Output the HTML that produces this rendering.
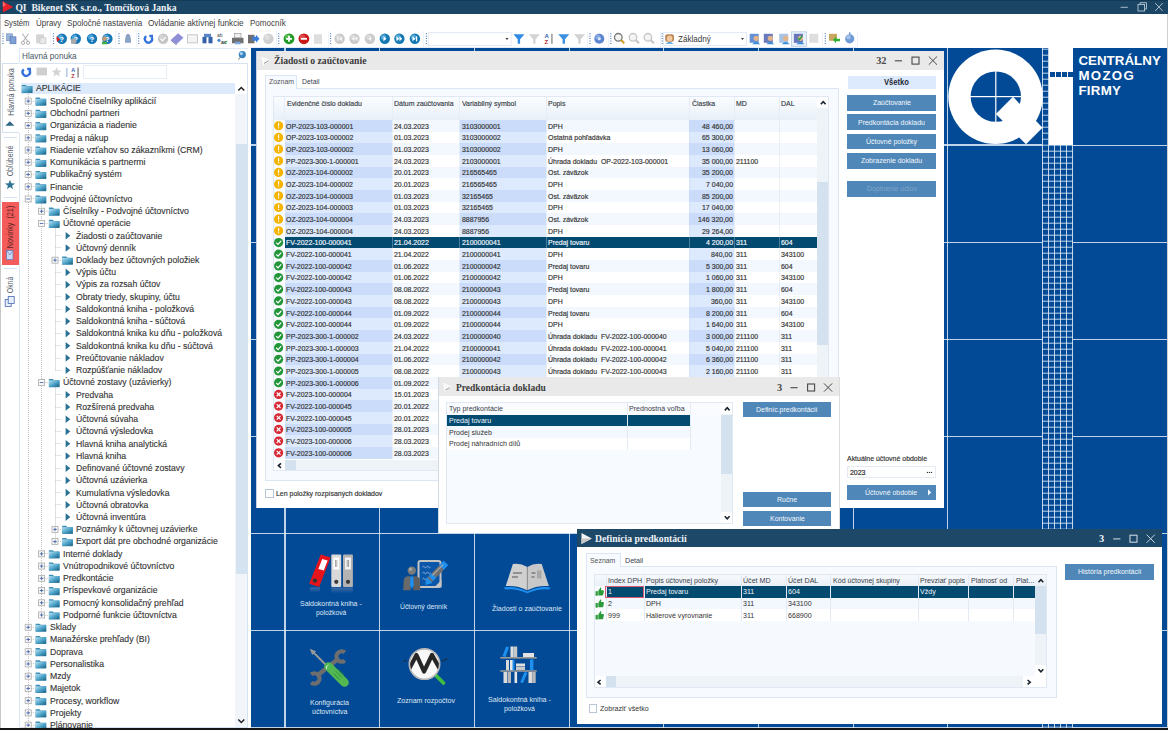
<!DOCTYPE html>
<html><head><meta charset="utf-8"><style>
html,body{margin:0;padding:0;width:1168px;height:730px;overflow:hidden;background:#fff;position:relative;}
body>div, .a>div{position:absolute;}
.t{white-space:pre;}
</style></head><body>
<div style="left:0.00px;top:0.00px;width:1168.00px;height:14.00px;background:#1b4565;"></div>
<div style="left:0.00px;top:14.00px;width:1168.00px;height:33.00px;background:#ffffff;"></div>
<div style="left:0.00px;top:14.00px;width:1.20px;height:716.00px;background:#c9c9c9;"></div>
<div style="left:0.00px;top:0.00px;width:1168.00px;height:0.80px;background:#153a56;"></div>
<svg style="position:absolute;left:0;top:0" width="200" height="14"><polygon points="2.8,1.2 13.2,7 2.8,12.6" fill="#e8202a"/><polygon points="2.8,1.2 6,5 2.8,7" fill="#ff6a6a"/></svg>
<div class="t" style="left:15.40px;top:2.00px;font:bold 9.6px/12px 'Liberation Serif',sans-serif;color:#eef2f6;letter-spacing:0.000px;">QI  Bikenet SK s.r.o., Tomčíková Janka</div>
<svg style="position:absolute;left:1110px;top:0" width="58" height="14" fill="none" stroke="#a9bccb" stroke-width="1"><line x1="10.6" y1="7.3" x2="17.8" y2="7.3"/><rect x="28" y="4.5" width="6.5" height="6.5"/><path d="M30,4.5 V2.7 H36.5 V9 H34.5"/><path d="M45.2,3 L52.7,11 M52.7,3 L45.2,11"/></svg>
<div style="left:1166.80px;top:14.00px;width:1.20px;height:716.00px;background:#cfcfcf;"></div>
<div class="t" style="left:4.00px;top:17.00px;font:normal 8.9px/12px 'Liberation Sans',sans-serif;color:#404040;letter-spacing:0.000px;transform:scaleX(0.8594);transform-origin:0 50%;">Systém</div>
<div class="t" style="left:36.00px;top:17.00px;font:normal 8.9px/12px 'Liberation Sans',sans-serif;color:#404040;letter-spacing:0.000px;transform:scaleX(0.9010);transform-origin:0 50%;">Úpravy</div>
<div class="t" style="left:66.80px;top:17.00px;font:normal 8.9px/12px 'Liberation Sans',sans-serif;color:#404040;letter-spacing:0.000px;transform:scaleX(0.9137);transform-origin:0 50%;">Spoločné nastavenia</div>
<div class="t" style="left:148.00px;top:17.00px;font:normal 8.9px/12px 'Liberation Sans',sans-serif;color:#404040;letter-spacing:0.000px;transform:scaleX(0.9231);transform-origin:0 50%;">Ovládanie aktívnej funkcie</div>
<div class="t" style="left:249.70px;top:17.00px;font:normal 8.9px/12px 'Liberation Sans',sans-serif;color:#404040;letter-spacing:0.000px;transform:scaleX(0.9072);transform-origin:0 50%;">Pomocník</div>
<div style="left:1.20px;top:46.60px;width:856.00px;height:0.80px;background:#e2ebf6;"></div>
<div style="left:50.30px;top:31.00px;width:0.80px;height:15.60px;background:#eef3f9;"></div>
<div style="left:115.30px;top:31.00px;width:0.80px;height:15.60px;background:#eef3f9;"></div>
<div style="left:135.50px;top:31.00px;width:0.80px;height:15.60px;background:#eef3f9;"></div>
<div style="left:275.50px;top:31.00px;width:0.80px;height:15.60px;background:#eef3f9;"></div>
<div style="left:327.50px;top:31.00px;width:0.80px;height:15.60px;background:#eef3f9;"></div>
<div style="left:423.40px;top:31.00px;width:0.80px;height:15.60px;background:#eef3f9;"></div>
<div style="left:587.00px;top:31.00px;width:0.80px;height:15.60px;background:#eef3f9;"></div>
<div style="left:608.00px;top:31.00px;width:0.80px;height:15.60px;background:#eef3f9;"></div>
<div style="left:659.50px;top:31.00px;width:0.80px;height:15.60px;background:#eef3f9;"></div>
<div style="left:822.00px;top:31.00px;width:0.80px;height:15.60px;background:#eef3f9;"></div>
<div style="left:857.40px;top:31.00px;width:0.80px;height:15.60px;background:#eef3f9;"></div>
<svg style="position:absolute;left:0;top:0" width="870" height="48"><line x1="3" y1="33.3" x2="3" y2="44.8" stroke="#4f7fc0" stroke-width="1.2" stroke-dasharray="1,1.4"/><line x1="53.5" y1="33.3" x2="53.5" y2="44.8" stroke="#4f7fc0" stroke-width="1.2" stroke-dasharray="1,1.4"/><line x1="119" y1="33.3" x2="119" y2="44.8" stroke="#4f7fc0" stroke-width="1.2" stroke-dasharray="1,1.4"/><line x1="138.7" y1="33.3" x2="138.7" y2="44.8" stroke="#4f7fc0" stroke-width="1.2" stroke-dasharray="1,1.4"/><line x1="278.7" y1="33.3" x2="278.7" y2="44.8" stroke="#4f7fc0" stroke-width="1.2" stroke-dasharray="1,1.4"/><line x1="330.6" y1="33.3" x2="330.6" y2="44.8" stroke="#4f7fc0" stroke-width="1.2" stroke-dasharray="1,1.4"/><line x1="426.4" y1="33.3" x2="426.4" y2="44.8" stroke="#4f7fc0" stroke-width="1.2" stroke-dasharray="1,1.4"/><line x1="590" y1="33.3" x2="590" y2="44.8" stroke="#4f7fc0" stroke-width="1.2" stroke-dasharray="1,1.4"/><line x1="610.8" y1="33.3" x2="610.8" y2="44.8" stroke="#4f7fc0" stroke-width="1.2" stroke-dasharray="1,1.4"/><line x1="662.2" y1="33.3" x2="662.2" y2="44.8" stroke="#4f7fc0" stroke-width="1.2" stroke-dasharray="1,1.4"/><line x1="825.3" y1="33.3" x2="825.3" y2="44.8" stroke="#4f7fc0" stroke-width="1.2" stroke-dasharray="1,1.4"/><rect x="6.5" y="33.8" width="6" height="7" fill="#9bb4d8" stroke="#6d8cc0" stroke-width=".6"/><rect x="10" y="36.8" width="6" height="7" fill="#7f9fd6" stroke="#4f70b0" stroke-width=".6"/><path d="M22.5,33.8 L28,41.8 M28.5,33.8 L23,41.8" stroke="#b5b5b5" stroke-width="1.1" fill="none"/><circle cx="23" cy="42.8" r="1.6" fill="none" stroke="#aaa"/><circle cx="28" cy="42.8" r="1.6" fill="none" stroke="#aaa"/><rect x="36" y="34.3" width="8" height="9" fill="#d6d6d6"/><rect x="40" y="37.8" width="6" height="6" fill="#e8e8e8" stroke="#c0c0c0" stroke-width=".6"/><circle cx="61.8" cy="38.8" r="5.2" fill="#1477b8"/><circle cx="60.5" cy="37.199999999999996" r="2.6" fill="#7cc8f0" opacity=".55"/><text x="61.8" y="41.8" font-family="Liberation Sans" font-weight="bold" font-size="7.5" fill="#fff" text-anchor="middle">?</text><circle cx="75.8" cy="38.8" r="5.2" fill="#1477b8"/><circle cx="74.5" cy="37.199999999999996" r="2.6" fill="#7cc8f0" opacity=".55"/><text x="75.8" y="41.8" font-family="Liberation Sans" font-weight="bold" font-size="7.5" fill="#fff" text-anchor="middle">?</text><circle cx="92" cy="38.8" r="5.2" fill="#1477b8"/><circle cx="90.7" cy="37.199999999999996" r="2.6" fill="#7cc8f0" opacity=".55"/><text x="92" y="41.8" font-family="Liberation Sans" font-weight="bold" font-size="7.5" fill="#fff" text-anchor="middle">?</text><circle cx="107.4" cy="38.8" r="5.2" fill="#1477b8"/><circle cx="106.10000000000001" cy="37.199999999999996" r="2.6" fill="#7cc8f0" opacity=".55"/><text x="107.4" y="41.8" font-family="Liberation Sans" font-weight="bold" font-size="7.5" fill="#fff" text-anchor="middle">?</text><polygon points="56.5,36.3 60,39.3 57,42.3" fill="#e01818"/><rect x="71" y="38.8" width="5" height="5" fill="#a8a8a8"/><circle cx="104.5" cy="38.8" r="2.3" fill="#c89a70"/><rect x="102" y="41.8" width="5" height="2.5" fill="#40b040"/><path d="M125,42.8 Q125,33.8 128,33.8 Q131,33.8 131,42.8 Z" fill="#8aa3c3"/><path d="M146.2,36.199999999999996 A3.6,3.6 0 1 0 151.6,37.199999999999996" fill="none" stroke="#3572dc" stroke-width="2.3"/><polygon points="149.3,34.699999999999996 153,34.699999999999996 153,38.4 151.2,37.3 149.3,37.0" fill="#3572dc"/><circle cx="163.1" cy="38.8" r="5.2" fill="#c4c4c4"/><circle cx="161.79999999999998" cy="37.199999999999996" r="2.6" fill="#e0e0e0" opacity=".55"/><path d="M160.5,38.8 L162.5,40.8 L166,36.8" stroke="#fff" stroke-width="1.2" fill="none"/><polygon points="171,39.8 178,33.3 183.5,37.8 176.5,44.3" fill="#8f8fd8"/><polygon points="171,39.8 176.5,44.3 176.5,45.3 171,40.8" fill="#6a6ab0"/><rect x="187.5" y="34.8" width="10" height="8" fill="#f4f4f4" stroke="#c8c8c8" stroke-width="1"/><rect x="202.5" y="36.8" width="4" height="6.5" fill="#3460a8"/><rect x="208.5" y="36.8" width="4" height="6.5" fill="#3460a8"/><rect x="204" y="33.8" width="7" height="3.5" fill="#5a86c8"/><text x="217" y="37.3" font-family="Liberation Sans" font-size="5" fill="#444">ab</text><text x="221" y="43.8" font-family="Liberation Sans" font-size="5" font-weight="bold" fill="#333">ac</text><circle cx="219" cy="40.3" r="1.6" fill="#4a8ad8"/><path d="M225,43.8 L227,40.8" stroke="#3a3" stroke-width="1"/><rect x="232" y="37.8" width="11.5" height="5.5" fill="#707070"/><rect x="234.5" y="33.3" width="6.5" height="4.5" fill="#f0f0f0" stroke="#909090" stroke-width=".6"/><rect x="235" y="41.8" width="5.5" height="2.5" fill="#7aa6de"/><rect x="248" y="34.8" width="6.5" height="8.5" fill="#6f6f6f"/><polygon points="252.5,36.8 256,36.8 256,34.8 259.5,38.8 256,42.8 256,40.8 252.5,40.8" fill="#3a7fe0"/><circle cx="268.4" cy="38.8" r="5.2" fill="#cfcfcf"/><circle cx="267.09999999999997" cy="37.199999999999996" r="2.6" fill="#ebebeb" opacity=".55"/><circle cx="289" cy="38.8" r="5.4" fill="#1f9a24"/><circle cx="287.7" cy="37.199999999999996" r="2.7" fill="#8be07a" opacity=".55"/><path d="M286,38.8 H292 M289,35.8 V41.8" stroke="#fff" stroke-width="1.8"/><circle cx="303.9" cy="38.8" r="5.4" fill="#c91818"/><circle cx="302.59999999999997" cy="37.199999999999996" r="2.7" fill="#f07070" opacity=".55"/><path d="M300.8,38.8 H307" stroke="#fff" stroke-width="1.8"/><rect x="314" y="34.3" width="8" height="9.5" fill="#dedede"/><circle cx="339.6" cy="38.8" r="5.2" fill="#c9c9c9"/><circle cx="338.3" cy="37.199999999999996" r="2.6" fill="#e6e6e6" opacity=".55"/><circle cx="354.5" cy="38.8" r="5.2" fill="#c9c9c9"/><circle cx="353.2" cy="37.199999999999996" r="2.6" fill="#e6e6e6" opacity=".55"/><circle cx="369.9" cy="38.8" r="5.2" fill="#c9c9c9"/><circle cx="368.59999999999997" cy="37.199999999999996" r="2.6" fill="#e6e6e6" opacity=".55"/><rect x="337.3" y="36.3" width="1.1" height="5" fill="#f4f4f4"/><polygon points="342.2,36.3 339,38.8 342.2,41.3" fill="#f4f4f4"/><polygon points="354.5,36.3 351.8,38.8 354.5,41.3" fill="#f4f4f4"/><polygon points="357.5,36.3 354.8,38.8 357.5,41.3" fill="#f4f4f4"/><polygon points="371.3,36.3 368.3,38.8 371.3,41.3" fill="#f4f4f4"/><circle cx="384.8" cy="38.8" r="5.2" fill="#1779b3"/><circle cx="383.5" cy="37.199999999999996" r="2.6" fill="#7fd0f5" opacity=".55"/><circle cx="399.4" cy="38.8" r="5.2" fill="#1779b3"/><circle cx="398.09999999999997" cy="37.199999999999996" r="2.6" fill="#7fd0f5" opacity=".55"/><circle cx="414.9" cy="38.8" r="5.2" fill="#1779b3"/><circle cx="413.59999999999997" cy="37.199999999999996" r="2.6" fill="#7fd0f5" opacity=".55"/><polygon points="383.5,36.3 386.5,38.8 383.5,41.3" fill="#fff"/><polygon points="396.5,36.3 399.2,38.8 396.5,41.3" fill="#fff"/><polygon points="399.5,36.3 402.2,38.8 399.5,41.3" fill="#fff"/><polygon points="412.5,36.3 415.5,38.8 412.5,41.3" fill="#fff"/><rect x="416" y="36.3" width="1.2" height="5" fill="#fff"/><polygon points="513.4,34.3 524.4,34.3 520.1,39.3 520.1,43.8 517.6999999999999,43.8 517.6999999999999,39.3" fill="#2f8ae6"/><polygon points="528.8,34.3 539.8,34.3 535.5,39.3 535.5,43.8 533.0999999999999,43.8 533.0999999999999,39.3" fill="#d4d4d4"/><polygon points="558.3,34.3 569.3,34.3 565.0,39.3 565.0,43.8 562.5999999999999,43.8 562.5999999999999,39.3" fill="#3b90e0"/><polygon points="574.0,34.3 585.0,34.3 580.7,39.3 580.7,43.8 578.3,43.8 578.3,39.3" fill="#d2d2d2"/><text x="544.5" y="37.8" font-family="Liberation Sans" font-weight="bold" font-size="6" fill="#3060b0">A</text><text x="544.5" y="44.3" font-family="Liberation Sans" font-weight="bold" font-size="6" fill="#b03030">Z</text><rect x="551.5" y="33.8" width="0.9" height="10" fill="#555"/><circle cx="599.3" cy="38.8" r="5" fill="#5d86d2"/><circle cx="598.0" cy="37.199999999999996" r="2.5" fill="#a8c4f0" opacity=".55"/><circle cx="599.3" cy="38.8" r="1.5" fill="#dfe8f8"/><circle cx="618.3" cy="37.3" r="3.8" fill="#f4f4f4" stroke="#777" stroke-width="1.3"/><path d="M621.0999999999999,40.099999999999994 L624.3,43.3" stroke="#d8a030" stroke-width="2.2"/><circle cx="633.0" cy="37.3" r="3.8" fill="#f4f4f4" stroke="#c6c6c6" stroke-width="1.3"/><path d="M635.8,40.099999999999994 L639.0,43.3" stroke="#c6c6c6" stroke-width="2.2"/><circle cx="647.9" cy="37.3" r="3.8" fill="#f4f4f4" stroke="#c6c6c6" stroke-width="1.3"/><path d="M650.6999999999999,40.099999999999994 L653.9,43.3" stroke="#c6c6c6" stroke-width="2.2"/><rect x="428.5" y="32.6" width="82.7" height="13" fill="#fff" stroke="#dfe7f2" stroke-width=".8"/><polygon points="505.5,38 508.5,38 507,40" fill="#333"/><rect x="663.5" y="32.6" width="83" height="13" fill="#fff" stroke="#dfe7f2" stroke-width=".8"/><polygon points="741,38 744,38 742.5,40" fill="#333"/><rect x="665.2" y="34.199999999999996" width="8.8" height="7.6" rx="2.4" fill="#b98350"/><circle cx="669.6" cy="38.4" r="2.9" fill="#f2c9a0"/><path d="M665.5,43.8 Q669.6,40.4 673.7,43.8 Z" fill="#3a9ae8"/><rect x="749.7" y="33.8" width="9" height="9" fill="#4a7ed0" opacity=".85"/><circle cx="756.2" cy="38.3" r="2.6" fill="#e2b48a"/><path d="M752.2,44.3 Q756.2,39.8 760.2,44.3" fill="#3a8ed8"/><rect x="763.8" y="33.8" width="9" height="9" fill="#5060b0" opacity=".85"/><circle cx="770.3" cy="38.3" r="2.6" fill="#e2b48a"/><path d="M766.3,44.3 Q770.3,39.8 774.3,44.3" fill="#3a8ed8"/><rect x="779.2" y="33.8" width="9" height="9" fill="#9ab8e0" opacity=".85"/><circle cx="785.7" cy="38.3" r="2.6" fill="#e2b48a"/><path d="M781.7,44.3 Q785.7,39.8 789.7,44.3" fill="#3a8ed8"/><rect x="791.5" y="31.8" width="15" height="14.5" fill="#e8f0fa" stroke="#b6cce8" stroke-width=".8"/><rect x="793.9" y="33.8" width="9" height="9" fill="#5060b0" opacity=".85"/><circle cx="800.4" cy="38.3" r="2.6" fill="#e2b48a"/><path d="M796.4,44.3 Q800.4,39.8 804.4,44.3" fill="#3a8ed8"/><rect x="809.3" y="33.8" width="9" height="9" fill="#d8d8d8" opacity=".85"/><path d="M798,37.8 L799.5,39.8 L802,35.8" stroke="#20a040" stroke-width="1.3" fill="none"/><rect x="829" y="33.8" width="8" height="7" fill="#c8a860"/><polygon points="833,39.8 836,36.8 836,38.8 840,38.8 840,41.3 836,41.3 836,43.3" fill="#30b030"/><circle cx="849.7" cy="38.8" r="4.6" fill="#6f9ad8"/><circle cx="848.4000000000001" cy="37.199999999999996" r="2.3" fill="#d0e0f8" opacity=".55"/><rect x="849" y="32.3" width="1.5" height="2" fill="#6f9ad8"/></svg>
<div class="t" style="left:677.60px;top:33.00px;font:normal 9.4px/12px 'Liberation Sans',sans-serif;color:#383838;letter-spacing:0.000px;transform:scaleX(0.8653);transform-origin:0 50%;">Základný</div>
<div style="left:1.20px;top:47.40px;width:250.00px;height:680.60px;background:#ffffff;"></div>
<div style="left:19.30px;top:133.40px;width:0.90px;height:594.00px;background:#dbe6f4;"></div>
<div style="left:2px;top:63.3px;width:17.3px;height:70.1px;background:#fff;border:0.9px solid #d3e0f0;border-right:none;box-sizing:border-box"></div>
<div style="left:3.50px;top:136.50px;width:13.50px;height:1.00px;background:#d5e2f3;"></div>
<div style="left:3.50px;top:197.30px;width:13.50px;height:1.00px;background:#d5e2f3;"></div>
<div style="left:2.20px;top:201.80px;width:16.80px;height:63.30px;background:#f45b5b;"></div>
<div style="left:3.50px;top:268.40px;width:13.50px;height:1.00px;background:#d5e2f3;"></div>
<div class="t" style="left:-18.39px;top:86.05px;width:57.37px;height:12px;font:8.6px/12px 'Liberation Sans',sans-serif;color:#56606c;transform:rotate(-90deg) scaleX(0.8314);text-align:center">Hlavná ponuka</div>
<div class="t" style="left:-8.65px;top:155.20px;width:37.89px;height:12px;font:8.6px/12px 'Liberation Sans',sans-serif;color:#56606c;transform:rotate(-90deg) scaleX(0.8076);text-align:center">Obľúbené</div>
<div class="t" style="left:-15.03px;top:220.70px;width:50.66px;height:12px;font:8.6px/12px 'Liberation Sans',sans-serif;color:#5a2424;transform:rotate(-90deg) scaleX(0.8410);text-align:center">Novinky  (21)</div>
<div class="t" style="left:0.02px;top:279.20px;width:20.55px;height:12px;font:8.6px/12px 'Liberation Sans',sans-serif;color:#56606c;transform:rotate(-90deg) scaleX(0.7979);text-align:center">Okná</div>
<div style="left:19.10px;top:47.70px;width:228.50px;height:0.80px;background:#e0e9f5;"></div>
<div style="left:19.10px;top:47.70px;width:0.80px;height:15.50px;background:#e0e9f5;"></div>
<div style="left:19.50px;top:62.80px;width:228.00px;height:0.90px;background:#d7e3f2;"></div>
<div class="t" style="left:21.80px;top:50.00px;font:normal 8.9px/12px 'Liberation Sans',sans-serif;color:#4a5866;letter-spacing:0.000px;transform:scaleX(0.9230);transform-origin:0 50%;">Hlavná ponuka</div>
<div style="left:247.30px;top:63.30px;width:0.90px;height:664.00px;background:#d7e3f2;"></div>
<div style="left:19.50px;top:726.80px;width:228.50px;height:0.90px;background:#d7e3f2;"></div>
<div style="left:235.30px;top:94.00px;width:12.00px;height:633.00px;background:#f1f5fa;"></div>
<div style="left:235.50px;top:143.90px;width:11.60px;height:430.10px;background:#d5e3f0;"></div>
<div style="left:20.80px;top:83.40px;width:214.50px;height:10.20px;background:#dceafb;"></div>
<div class="t" style="left:35.60px;top:82.00px;font:normal 9.2px/12px 'Liberation Sans',sans-serif;color:#333333;letter-spacing:0.000px;-webkit-text-stroke:0.12px #333;transform:scaleX(0.9440);transform-origin:0 50%;">APLIKÁCIE</div>
<div class="t" style="left:49.50px;top:95.00px;font:normal 9.2px/12px 'Liberation Sans',sans-serif;color:#333333;letter-spacing:0.000px;-webkit-text-stroke:0.12px #333;transform:scaleX(0.9440);transform-origin:0 50%;">Spoločné číselníky aplikácií</div>
<div class="t" style="left:49.50px;top:107.00px;font:normal 9.2px/12px 'Liberation Sans',sans-serif;color:#333333;letter-spacing:0.000px;-webkit-text-stroke:0.12px #333;transform:scaleX(0.9440);transform-origin:0 50%;">Obchodní partneri</div>
<div class="t" style="left:49.50px;top:119.00px;font:normal 9.2px/12px 'Liberation Sans',sans-serif;color:#333333;letter-spacing:0.000px;-webkit-text-stroke:0.12px #333;transform:scaleX(0.9440);transform-origin:0 50%;">Organizácia a riadenie</div>
<div class="t" style="left:49.50px;top:132.00px;font:normal 9.2px/12px 'Liberation Sans',sans-serif;color:#333333;letter-spacing:0.000px;-webkit-text-stroke:0.12px #333;transform:scaleX(0.9440);transform-origin:0 50%;">Predaj a nákup</div>
<div class="t" style="left:49.50px;top:144.00px;font:normal 9.2px/12px 'Liberation Sans',sans-serif;color:#333333;letter-spacing:0.000px;-webkit-text-stroke:0.12px #333;transform:scaleX(0.9440);transform-origin:0 50%;">Riadenie vzťahov so zákazníkmi (CRM)</div>
<div class="t" style="left:49.50px;top:156.00px;font:normal 9.2px/12px 'Liberation Sans',sans-serif;color:#333333;letter-spacing:0.000px;-webkit-text-stroke:0.12px #333;transform:scaleX(0.9440);transform-origin:0 50%;">Komunikácia s partnermi</div>
<div class="t" style="left:49.50px;top:168.00px;font:normal 9.2px/12px 'Liberation Sans',sans-serif;color:#333333;letter-spacing:0.000px;-webkit-text-stroke:0.12px #333;transform:scaleX(0.9440);transform-origin:0 50%;">Publikačný systém</div>
<div class="t" style="left:49.50px;top:181.00px;font:normal 9.2px/12px 'Liberation Sans',sans-serif;color:#333333;letter-spacing:0.000px;-webkit-text-stroke:0.12px #333;transform:scaleX(0.9440);transform-origin:0 50%;">Financie</div>
<div class="t" style="left:49.50px;top:193.00px;font:normal 9.2px/12px 'Liberation Sans',sans-serif;color:#333333;letter-spacing:0.000px;-webkit-text-stroke:0.12px #333;transform:scaleX(0.9440);transform-origin:0 50%;">Podvojné účtovníctvo</div>
<div class="t" style="left:62.80px;top:205.00px;font:normal 9.2px/12px 'Liberation Sans',sans-serif;color:#333333;letter-spacing:0.000px;-webkit-text-stroke:0.12px #333;transform:scaleX(0.9440);transform-origin:0 50%;">Číselníky - Podvojné účtovníctvo</div>
<div class="t" style="left:62.80px;top:217.00px;font:normal 9.2px/12px 'Liberation Sans',sans-serif;color:#333333;letter-spacing:0.000px;-webkit-text-stroke:0.12px #333;transform:scaleX(0.9440);transform-origin:0 50%;">Účtovné operácie</div>
<div class="t" style="left:76.10px;top:230.00px;font:normal 9.2px/12px 'Liberation Sans',sans-serif;color:#333333;letter-spacing:0.000px;-webkit-text-stroke:0.12px #333;transform:scaleX(0.9440);transform-origin:0 50%;">Žiadosti o zaúčtovanie</div>
<div class="t" style="left:76.10px;top:242.00px;font:normal 9.2px/12px 'Liberation Sans',sans-serif;color:#333333;letter-spacing:0.000px;-webkit-text-stroke:0.12px #333;transform:scaleX(0.9440);transform-origin:0 50%;">Účtovný denník</div>
<div class="t" style="left:76.10px;top:254.00px;font:normal 9.2px/12px 'Liberation Sans',sans-serif;color:#333333;letter-spacing:0.000px;-webkit-text-stroke:0.12px #333;transform:scaleX(0.9440);transform-origin:0 50%;">Doklady bez účtovných položiek</div>
<div class="t" style="left:76.10px;top:266.00px;font:normal 9.2px/12px 'Liberation Sans',sans-serif;color:#333333;letter-spacing:0.000px;-webkit-text-stroke:0.12px #333;transform:scaleX(0.9440);transform-origin:0 50%;">Výpis účtu</div>
<div class="t" style="left:76.10px;top:278.00px;font:normal 9.2px/12px 'Liberation Sans',sans-serif;color:#333333;letter-spacing:0.000px;-webkit-text-stroke:0.12px #333;transform:scaleX(0.9440);transform-origin:0 50%;">Výpis za rozsah účtov</div>
<div class="t" style="left:76.10px;top:291.00px;font:normal 9.2px/12px 'Liberation Sans',sans-serif;color:#333333;letter-spacing:0.000px;-webkit-text-stroke:0.12px #333;transform:scaleX(0.9440);transform-origin:0 50%;">Obraty triedy, skupiny, účtu</div>
<div class="t" style="left:76.10px;top:303.00px;font:normal 9.2px/12px 'Liberation Sans',sans-serif;color:#333333;letter-spacing:0.000px;-webkit-text-stroke:0.12px #333;transform:scaleX(0.9440);transform-origin:0 50%;">Saldokontná kniha - položková</div>
<div class="t" style="left:76.10px;top:315.00px;font:normal 9.2px/12px 'Liberation Sans',sans-serif;color:#333333;letter-spacing:0.000px;-webkit-text-stroke:0.12px #333;transform:scaleX(0.9440);transform-origin:0 50%;">Saldokontná kniha - súčtová</div>
<div class="t" style="left:76.10px;top:327.00px;font:normal 9.2px/12px 'Liberation Sans',sans-serif;color:#333333;letter-spacing:0.000px;-webkit-text-stroke:0.12px #333;transform:scaleX(0.9440);transform-origin:0 50%;">Saldokontná knika ku dňu - položková</div>
<div class="t" style="left:76.10px;top:340.00px;font:normal 9.2px/12px 'Liberation Sans',sans-serif;color:#333333;letter-spacing:0.000px;-webkit-text-stroke:0.12px #333;transform:scaleX(0.9440);transform-origin:0 50%;">Saldokontná knika ku dňu - súčtová</div>
<div class="t" style="left:76.10px;top:352.00px;font:normal 9.2px/12px 'Liberation Sans',sans-serif;color:#333333;letter-spacing:0.000px;-webkit-text-stroke:0.12px #333;transform:scaleX(0.9440);transform-origin:0 50%;">Preúčtovanie nákladov</div>
<div class="t" style="left:76.10px;top:364.00px;font:normal 9.2px/12px 'Liberation Sans',sans-serif;color:#333333;letter-spacing:0.000px;-webkit-text-stroke:0.12px #333;transform:scaleX(0.9440);transform-origin:0 50%;">Rozpúšťanie nákladov</div>
<div class="t" style="left:62.80px;top:376.00px;font:normal 9.2px/12px 'Liberation Sans',sans-serif;color:#333333;letter-spacing:0.000px;-webkit-text-stroke:0.12px #333;transform:scaleX(0.9440);transform-origin:0 50%;">Účtovné zostavy (uzávierky)</div>
<div class="t" style="left:76.10px;top:389.00px;font:normal 9.2px/12px 'Liberation Sans',sans-serif;color:#333333;letter-spacing:0.000px;-webkit-text-stroke:0.12px #333;transform:scaleX(0.9440);transform-origin:0 50%;">Predvaha</div>
<div class="t" style="left:76.10px;top:401.00px;font:normal 9.2px/12px 'Liberation Sans',sans-serif;color:#333333;letter-spacing:0.000px;-webkit-text-stroke:0.12px #333;transform:scaleX(0.9440);transform-origin:0 50%;">Rozšírená predvaha</div>
<div class="t" style="left:76.10px;top:413.00px;font:normal 9.2px/12px 'Liberation Sans',sans-serif;color:#333333;letter-spacing:0.000px;-webkit-text-stroke:0.12px #333;transform:scaleX(0.9440);transform-origin:0 50%;">Účtovná súvaha</div>
<div class="t" style="left:76.10px;top:425.00px;font:normal 9.2px/12px 'Liberation Sans',sans-serif;color:#333333;letter-spacing:0.000px;-webkit-text-stroke:0.12px #333;transform:scaleX(0.9440);transform-origin:0 50%;">Účtovná výsledovka</div>
<div class="t" style="left:76.10px;top:438.00px;font:normal 9.2px/12px 'Liberation Sans',sans-serif;color:#333333;letter-spacing:0.000px;-webkit-text-stroke:0.12px #333;transform:scaleX(0.9440);transform-origin:0 50%;">Hlavná kniha analytická</div>
<div class="t" style="left:76.10px;top:450.00px;font:normal 9.2px/12px 'Liberation Sans',sans-serif;color:#333333;letter-spacing:0.000px;-webkit-text-stroke:0.12px #333;transform:scaleX(0.9440);transform-origin:0 50%;">Hlavná kniha</div>
<div class="t" style="left:76.10px;top:462.00px;font:normal 9.2px/12px 'Liberation Sans',sans-serif;color:#333333;letter-spacing:0.000px;-webkit-text-stroke:0.12px #333;transform:scaleX(0.9440);transform-origin:0 50%;">Definované účtovné zostavy</div>
<div class="t" style="left:76.10px;top:474.00px;font:normal 9.2px/12px 'Liberation Sans',sans-serif;color:#333333;letter-spacing:0.000px;-webkit-text-stroke:0.12px #333;transform:scaleX(0.9440);transform-origin:0 50%;">Účtovná uzávierka</div>
<div class="t" style="left:76.10px;top:487.00px;font:normal 9.2px/12px 'Liberation Sans',sans-serif;color:#333333;letter-spacing:0.000px;-webkit-text-stroke:0.12px #333;transform:scaleX(0.9440);transform-origin:0 50%;">Kumulatívna výsledovka</div>
<div class="t" style="left:76.10px;top:499.00px;font:normal 9.2px/12px 'Liberation Sans',sans-serif;color:#333333;letter-spacing:0.000px;-webkit-text-stroke:0.12px #333;transform:scaleX(0.9440);transform-origin:0 50%;">Účtovná obratovka</div>
<div class="t" style="left:76.10px;top:511.00px;font:normal 9.2px/12px 'Liberation Sans',sans-serif;color:#333333;letter-spacing:0.000px;-webkit-text-stroke:0.12px #333;transform:scaleX(0.9440);transform-origin:0 50%;">Účtovná inventúra</div>
<div class="t" style="left:76.10px;top:523.00px;font:normal 9.2px/12px 'Liberation Sans',sans-serif;color:#333333;letter-spacing:0.000px;-webkit-text-stroke:0.12px #333;transform:scaleX(0.9440);transform-origin:0 50%;">Poznámky k účtovnej uzávierke</div>
<div class="t" style="left:76.10px;top:535.00px;font:normal 9.2px/12px 'Liberation Sans',sans-serif;color:#333333;letter-spacing:0.000px;-webkit-text-stroke:0.12px #333;transform:scaleX(0.9440);transform-origin:0 50%;">Export dát pre obchodné organizácie</div>
<div class="t" style="left:62.80px;top:548.00px;font:normal 9.2px/12px 'Liberation Sans',sans-serif;color:#333333;letter-spacing:0.000px;-webkit-text-stroke:0.12px #333;transform:scaleX(0.9440);transform-origin:0 50%;">Interné doklady</div>
<div class="t" style="left:62.80px;top:560.00px;font:normal 9.2px/12px 'Liberation Sans',sans-serif;color:#333333;letter-spacing:0.000px;-webkit-text-stroke:0.12px #333;transform:scaleX(0.9440);transform-origin:0 50%;">Vnútropodnikové účtovníctvo</div>
<div class="t" style="left:62.80px;top:572.00px;font:normal 9.2px/12px 'Liberation Sans',sans-serif;color:#333333;letter-spacing:0.000px;-webkit-text-stroke:0.12px #333;transform:scaleX(0.9440);transform-origin:0 50%;">Predkontácie</div>
<div class="t" style="left:62.80px;top:584.00px;font:normal 9.2px/12px 'Liberation Sans',sans-serif;color:#333333;letter-spacing:0.000px;-webkit-text-stroke:0.12px #333;transform:scaleX(0.9440);transform-origin:0 50%;">Príspevkové organizácie</div>
<div class="t" style="left:62.80px;top:597.00px;font:normal 9.2px/12px 'Liberation Sans',sans-serif;color:#333333;letter-spacing:0.000px;-webkit-text-stroke:0.12px #333;transform:scaleX(0.9440);transform-origin:0 50%;">Pomocný konsolidačný prehľad</div>
<div class="t" style="left:62.80px;top:609.00px;font:normal 9.2px/12px 'Liberation Sans',sans-serif;color:#333333;letter-spacing:0.000px;-webkit-text-stroke:0.12px #333;transform:scaleX(0.9440);transform-origin:0 50%;">Podporné funkcie účtovníctva</div>
<div class="t" style="left:49.50px;top:621.00px;font:normal 9.2px/12px 'Liberation Sans',sans-serif;color:#333333;letter-spacing:0.000px;-webkit-text-stroke:0.12px #333;transform:scaleX(0.9440);transform-origin:0 50%;">Sklady</div>
<div class="t" style="left:49.50px;top:633.00px;font:normal 9.2px/12px 'Liberation Sans',sans-serif;color:#333333;letter-spacing:0.000px;-webkit-text-stroke:0.12px #333;transform:scaleX(0.9440);transform-origin:0 50%;">Manažérske prehľady (BI)</div>
<div class="t" style="left:49.50px;top:646.00px;font:normal 9.2px/12px 'Liberation Sans',sans-serif;color:#333333;letter-spacing:0.000px;-webkit-text-stroke:0.12px #333;transform:scaleX(0.9440);transform-origin:0 50%;">Doprava</div>
<div class="t" style="left:49.50px;top:658.00px;font:normal 9.2px/12px 'Liberation Sans',sans-serif;color:#333333;letter-spacing:0.000px;-webkit-text-stroke:0.12px #333;transform:scaleX(0.9440);transform-origin:0 50%;">Personalistika</div>
<div class="t" style="left:49.50px;top:670.00px;font:normal 9.2px/12px 'Liberation Sans',sans-serif;color:#333333;letter-spacing:0.000px;-webkit-text-stroke:0.12px #333;transform:scaleX(0.9440);transform-origin:0 50%;">Mzdy</div>
<div class="t" style="left:49.50px;top:682.00px;font:normal 9.2px/12px 'Liberation Sans',sans-serif;color:#333333;letter-spacing:0.000px;-webkit-text-stroke:0.12px #333;transform:scaleX(0.9440);transform-origin:0 50%;">Majetok</div>
<div class="t" style="left:49.50px;top:695.00px;font:normal 9.2px/12px 'Liberation Sans',sans-serif;color:#333333;letter-spacing:0.000px;-webkit-text-stroke:0.12px #333;transform:scaleX(0.9440);transform-origin:0 50%;">Procesy, workflow</div>
<div class="t" style="left:49.50px;top:707.00px;font:normal 9.2px/12px 'Liberation Sans',sans-serif;color:#333333;letter-spacing:0.000px;-webkit-text-stroke:0.12px #333;transform:scaleX(0.9440);transform-origin:0 50%;">Projekty</div>
<div class="t" style="left:49.50px;top:719.00px;font:normal 9.2px/12px 'Liberation Sans',sans-serif;color:#333333;letter-spacing:0.000px;-webkit-text-stroke:0.12px #333;transform:scaleX(0.9440);transform-origin:0 50%;">Plánovanie</div>
<svg style="position:absolute;left:0;top:0" width="252" height="730"><defs><linearGradient id="fg" x1="0" y1="0" x2="1" y2="1"><stop offset="0" stop-color="#b9e0f2"/><stop offset=".55" stop-color="#4aa2c8"/><stop offset="1" stop-color="#1d5f80"/></linearGradient></defs><polygon points="5.3,125.7 14.3,125.7 9.8,121.3" fill="#2b6684"/><polygon points="10,179.8 11.3,183.3 15,183.5 12.1,185.7 13.1,189.2 10,187.1 6.9,189.2 7.9,185.7 5,183.5 8.7,183.3" fill="#2f7394"/><rect x="6.6" y="250.3" width="6.4" height="9.3" fill="#c9d6f2" stroke="#5a78b8" stroke-width=".7"/><path d="M6.6,250.3 L9.8,255 L13,250.3" fill="none" stroke="#5a78b8" stroke-width=".6"/><rect x="5.2" y="299.5" width="6" height="7" fill="#e8eefa" stroke="#4a6ab0" stroke-width=".8"/><rect x="8.2" y="296.5" width="6" height="7" fill="#e8eefa" stroke="#4a6ab0" stroke-width=".8"/><circle cx="242.3" cy="54.6" r="3.6" fill="#3a84c0"/><circle cx="241.3" cy="53.6" r="1.6" fill="#a8d4f4"/><path d="M240,57.5 L238.5,59.5" stroke="#667" stroke-width="1"/><path d="M23.8,69.4 A3.7,3.7 0 1 0 29.4,70.2" fill="none" stroke="#3572dc" stroke-width="2.3"/><polygon points="27.2,67.7 31,67.7 31,71.5 29.1,70.4 27.2,70.1" fill="#3572dc"/><rect x="36.6" y="67.6" width="10.4" height="7.8" fill="#cfcfcf"/><polygon points="56.6,67.2 58,70.6 61.6,70.8 58.8,73 59.8,76.5 56.6,74.5 53.4,76.5 54.4,73 51.6,70.8 55.2,70.6" fill="#d3d3d3"/><rect x="66.5" y="68" width="0.8" height="9" fill="#6a9ad0"/><text x="71.3" y="72" font-family="Liberation Sans" font-weight="bold" font-size="5.4" fill="#3464b4">A</text><text x="71.3" y="78" font-family="Liberation Sans" font-weight="bold" font-size="5.6" fill="#b03434">Z</text><rect x="77.6" y="67.5" width="0.9" height="10" fill="#444"/><rect x="83.5" y="65.5" width="83" height="13" fill="#fff" stroke="#e2eaf5" stroke-width=".9"/><path d="M238.3,90.5 L241.3,87.5 L244.3,90.5" fill="none" stroke="#222" stroke-width="1.5"/><path d="M238.3,719.5 L241.3,722.5 L244.3,719.5" fill="none" stroke="#222" stroke-width="1.5"/><line x1="28.5" y1="94" x2="28.5" y2="727" stroke="#c2c2c2" stroke-width="1" stroke-dasharray="1,1"/><line x1="41.5" y1="201.988" x2="41.5" y2="615.0120000000001" stroke="#c2c2c2" stroke-width="1" stroke-dasharray="1,1"/><line x1="55.5" y1="226.46" x2="55.5" y2="370.29200000000003" stroke="#c2c2c2" stroke-width="1" stroke-dasharray="1,1"/><line x1="55.5" y1="385.528" x2="55.5" y2="541.596" stroke="#c2c2c2" stroke-width="1" stroke-dasharray="1,1"/><path d="M21.8,84.9 h4 l1,1.2 h5.6 v7 h-10.6 z" fill="#3d8db5"/><rect x="21.8" y="86.3" width="10.6" height="6.3" fill="url(#fg)"/><line x1="31.2" y1="101.5" x2="35.2" y2="101.5" stroke="#c6c6c6" stroke-width="1" stroke-dasharray="1,1"/><rect x="25.2" y="98.1" width="6" height="6" fill="#fafafa" stroke="#a9a9a9" stroke-width=".8"/><line x1="26.4" y1="101.1" x2="30.0" y2="101.1" stroke="#3050a0" stroke-width=".8"/><line x1="28.2" y1="99.3" x2="28.2" y2="102.89999999999999" stroke="#3050a0" stroke-width=".8"/><path d="M35.6,97.5 h4 l1,1.2 h5.6 v7 h-10.6 z" fill="#3d8db5"/><rect x="35.6" y="98.89999999999999" width="10.6" height="6.3" fill="url(#fg)"/><line x1="31.2" y1="113.5" x2="35.2" y2="113.5" stroke="#c6c6c6" stroke-width="1" stroke-dasharray="1,1"/><rect x="25.2" y="110.336" width="6" height="6" fill="#fafafa" stroke="#a9a9a9" stroke-width=".8"/><line x1="26.4" y1="113.336" x2="30.0" y2="113.336" stroke="#3050a0" stroke-width=".8"/><line x1="28.2" y1="111.536" x2="28.2" y2="115.136" stroke="#3050a0" stroke-width=".8"/><path d="M35.6,109.736 h4 l1,1.2 h5.6 v7 h-10.6 z" fill="#3d8db5"/><rect x="35.6" y="111.136" width="10.6" height="6.3" fill="url(#fg)"/><line x1="31.2" y1="125.5" x2="35.2" y2="125.5" stroke="#c6c6c6" stroke-width="1" stroke-dasharray="1,1"/><rect x="25.2" y="122.572" width="6" height="6" fill="#fafafa" stroke="#a9a9a9" stroke-width=".8"/><line x1="26.4" y1="125.572" x2="30.0" y2="125.572" stroke="#3050a0" stroke-width=".8"/><line x1="28.2" y1="123.772" x2="28.2" y2="127.372" stroke="#3050a0" stroke-width=".8"/><path d="M35.6,121.97200000000001 h4 l1,1.2 h5.6 v7 h-10.6 z" fill="#3d8db5"/><rect x="35.6" y="123.372" width="10.6" height="6.3" fill="url(#fg)"/><line x1="31.2" y1="137.5" x2="35.2" y2="137.5" stroke="#c6c6c6" stroke-width="1" stroke-dasharray="1,1"/><rect x="25.2" y="134.808" width="6" height="6" fill="#fafafa" stroke="#a9a9a9" stroke-width=".8"/><line x1="26.4" y1="137.808" x2="30.0" y2="137.808" stroke="#3050a0" stroke-width=".8"/><line x1="28.2" y1="136.00799999999998" x2="28.2" y2="139.608" stroke="#3050a0" stroke-width=".8"/><path d="M35.6,134.208 h4 l1,1.2 h5.6 v7 h-10.6 z" fill="#3d8db5"/><rect x="35.6" y="135.608" width="10.6" height="6.3" fill="url(#fg)"/><line x1="31.2" y1="150.5" x2="35.2" y2="150.5" stroke="#c6c6c6" stroke-width="1" stroke-dasharray="1,1"/><rect x="25.2" y="147.04399999999998" width="6" height="6" fill="#fafafa" stroke="#a9a9a9" stroke-width=".8"/><line x1="26.4" y1="150.04399999999998" x2="30.0" y2="150.04399999999998" stroke="#3050a0" stroke-width=".8"/><line x1="28.2" y1="148.24399999999997" x2="28.2" y2="151.844" stroke="#3050a0" stroke-width=".8"/><path d="M35.6,146.444 h4 l1,1.2 h5.6 v7 h-10.6 z" fill="#3d8db5"/><rect x="35.6" y="147.844" width="10.6" height="6.3" fill="url(#fg)"/><line x1="31.2" y1="162.5" x2="35.2" y2="162.5" stroke="#c6c6c6" stroke-width="1" stroke-dasharray="1,1"/><rect x="25.2" y="159.28" width="6" height="6" fill="#fafafa" stroke="#a9a9a9" stroke-width=".8"/><line x1="26.4" y1="162.28" x2="30.0" y2="162.28" stroke="#3050a0" stroke-width=".8"/><line x1="28.2" y1="160.48" x2="28.2" y2="164.08" stroke="#3050a0" stroke-width=".8"/><path d="M35.6,158.68 h4 l1,1.2 h5.6 v7 h-10.6 z" fill="#3d8db5"/><rect x="35.6" y="160.08" width="10.6" height="6.3" fill="url(#fg)"/><line x1="31.2" y1="174.5" x2="35.2" y2="174.5" stroke="#c6c6c6" stroke-width="1" stroke-dasharray="1,1"/><rect x="25.2" y="171.516" width="6" height="6" fill="#fafafa" stroke="#a9a9a9" stroke-width=".8"/><line x1="26.4" y1="174.516" x2="30.0" y2="174.516" stroke="#3050a0" stroke-width=".8"/><line x1="28.2" y1="172.71599999999998" x2="28.2" y2="176.316" stroke="#3050a0" stroke-width=".8"/><path d="M35.6,170.916 h4 l1,1.2 h5.6 v7 h-10.6 z" fill="#3d8db5"/><rect x="35.6" y="172.316" width="10.6" height="6.3" fill="url(#fg)"/><line x1="31.2" y1="186.5" x2="35.2" y2="186.5" stroke="#c6c6c6" stroke-width="1" stroke-dasharray="1,1"/><rect x="25.2" y="183.752" width="6" height="6" fill="#fafafa" stroke="#a9a9a9" stroke-width=".8"/><line x1="26.4" y1="186.752" x2="30.0" y2="186.752" stroke="#3050a0" stroke-width=".8"/><line x1="28.2" y1="184.952" x2="28.2" y2="188.55200000000002" stroke="#3050a0" stroke-width=".8"/><path d="M35.6,183.15200000000002 h4 l1,1.2 h5.6 v7 h-10.6 z" fill="#3d8db5"/><rect x="35.6" y="184.55200000000002" width="10.6" height="6.3" fill="url(#fg)"/><line x1="31.2" y1="198.5" x2="35.2" y2="198.5" stroke="#c6c6c6" stroke-width="1" stroke-dasharray="1,1"/><rect x="25.2" y="195.988" width="6" height="6" fill="#fafafa" stroke="#a9a9a9" stroke-width=".8"/><line x1="26.4" y1="198.988" x2="30.0" y2="198.988" stroke="#3050a0" stroke-width=".8"/><path d="M35.6,195.388 h4 l1,1.2 h5.6 v7 h-10.6 z" fill="#3d8db5"/><rect x="35.6" y="196.788" width="10.6" height="6.3" fill="url(#fg)"/><line x1="44.6" y1="211.5" x2="48.6" y2="211.5" stroke="#c6c6c6" stroke-width="1" stroke-dasharray="1,1"/><rect x="38.6" y="208.224" width="6" height="6" fill="#fafafa" stroke="#a9a9a9" stroke-width=".8"/><line x1="39.800000000000004" y1="211.224" x2="43.4" y2="211.224" stroke="#3050a0" stroke-width=".8"/><line x1="41.6" y1="209.42399999999998" x2="41.6" y2="213.024" stroke="#3050a0" stroke-width=".8"/><path d="M48.9,207.624 h4 l1,1.2 h5.6 v7 h-10.6 z" fill="#3d8db5"/><rect x="48.9" y="209.024" width="10.6" height="6.3" fill="url(#fg)"/><line x1="44.6" y1="223.5" x2="48.6" y2="223.5" stroke="#c6c6c6" stroke-width="1" stroke-dasharray="1,1"/><rect x="38.6" y="220.46" width="6" height="6" fill="#fafafa" stroke="#a9a9a9" stroke-width=".8"/><line x1="39.800000000000004" y1="223.46" x2="43.4" y2="223.46" stroke="#3050a0" stroke-width=".8"/><path d="M48.9,219.86 h4 l1,1.2 h5.6 v7 h-10.6 z" fill="#3d8db5"/><rect x="48.9" y="221.26000000000002" width="10.6" height="6.3" fill="url(#fg)"/><line x1="55.3" y1="235.5" x2="61.5" y2="235.5" stroke="#c6c6c6" stroke-width="1" stroke-dasharray="1,1"/><polygon points="65.6,231.896 70.3,235.696 65.6,239.496" fill="#2a7194"/><line x1="55.3" y1="247.5" x2="61.5" y2="247.5" stroke="#c6c6c6" stroke-width="1" stroke-dasharray="1,1"/><polygon points="65.6,244.13199999999998 70.3,247.932 65.6,251.732" fill="#2a7194"/><line x1="58.0" y1="260.5" x2="62.0" y2="260.5" stroke="#c6c6c6" stroke-width="1" stroke-dasharray="1,1"/><rect x="52.0" y="257.168" width="6" height="6" fill="#fafafa" stroke="#a9a9a9" stroke-width=".8"/><line x1="53.2" y1="260.168" x2="56.8" y2="260.168" stroke="#3050a0" stroke-width=".8"/><line x1="55.0" y1="258.368" x2="55.0" y2="261.968" stroke="#3050a0" stroke-width=".8"/><path d="M62.199999999999996,256.568 h4 l1,1.2 h5.6 v7 h-10.6 z" fill="#3d8db5"/><rect x="62.199999999999996" y="257.968" width="10.6" height="6.3" fill="url(#fg)"/><line x1="55.3" y1="272.5" x2="61.5" y2="272.5" stroke="#c6c6c6" stroke-width="1" stroke-dasharray="1,1"/><polygon points="65.6,268.604 70.3,272.404 65.6,276.204" fill="#2a7194"/><line x1="55.3" y1="284.5" x2="61.5" y2="284.5" stroke="#c6c6c6" stroke-width="1" stroke-dasharray="1,1"/><polygon points="65.6,280.84 70.3,284.64 65.6,288.44" fill="#2a7194"/><line x1="55.3" y1="296.5" x2="61.5" y2="296.5" stroke="#c6c6c6" stroke-width="1" stroke-dasharray="1,1"/><polygon points="65.6,293.07599999999996 70.3,296.876 65.6,300.676" fill="#2a7194"/><line x1="55.3" y1="309.5" x2="61.5" y2="309.5" stroke="#c6c6c6" stroke-width="1" stroke-dasharray="1,1"/><polygon points="65.6,305.31199999999995 70.3,309.11199999999997 65.6,312.912" fill="#2a7194"/><line x1="55.3" y1="321.5" x2="61.5" y2="321.5" stroke="#c6c6c6" stroke-width="1" stroke-dasharray="1,1"/><polygon points="65.6,317.548 70.3,321.348 65.6,325.148" fill="#2a7194"/><line x1="55.3" y1="333.5" x2="61.5" y2="333.5" stroke="#c6c6c6" stroke-width="1" stroke-dasharray="1,1"/><polygon points="65.6,329.784 70.3,333.584 65.6,337.384" fill="#2a7194"/><line x1="55.3" y1="345.5" x2="61.5" y2="345.5" stroke="#c6c6c6" stroke-width="1" stroke-dasharray="1,1"/><polygon points="65.6,342.02000000000004 70.3,345.82000000000005 65.6,349.62000000000006" fill="#2a7194"/><line x1="55.3" y1="358.5" x2="61.5" y2="358.5" stroke="#c6c6c6" stroke-width="1" stroke-dasharray="1,1"/><polygon points="65.6,354.25600000000003 70.3,358.05600000000004 65.6,361.85600000000005" fill="#2a7194"/><line x1="55.3" y1="370.5" x2="61.5" y2="370.5" stroke="#c6c6c6" stroke-width="1" stroke-dasharray="1,1"/><polygon points="65.6,366.492 70.3,370.29200000000003 65.6,374.09200000000004" fill="#2a7194"/><line x1="44.6" y1="382.5" x2="48.6" y2="382.5" stroke="#c6c6c6" stroke-width="1" stroke-dasharray="1,1"/><rect x="38.6" y="379.528" width="6" height="6" fill="#fafafa" stroke="#a9a9a9" stroke-width=".8"/><line x1="39.800000000000004" y1="382.528" x2="43.4" y2="382.528" stroke="#3050a0" stroke-width=".8"/><path d="M48.9,378.928 h4 l1,1.2 h5.6 v7 h-10.6 z" fill="#3d8db5"/><rect x="48.9" y="380.32800000000003" width="10.6" height="6.3" fill="url(#fg)"/><line x1="55.3" y1="394.5" x2="61.5" y2="394.5" stroke="#c6c6c6" stroke-width="1" stroke-dasharray="1,1"/><polygon points="65.6,390.964 70.3,394.764 65.6,398.564" fill="#2a7194"/><line x1="55.3" y1="407.5" x2="61.5" y2="407.5" stroke="#c6c6c6" stroke-width="1" stroke-dasharray="1,1"/><polygon points="65.6,403.2 70.3,407.0 65.6,410.8" fill="#2a7194"/><line x1="55.3" y1="419.5" x2="61.5" y2="419.5" stroke="#c6c6c6" stroke-width="1" stroke-dasharray="1,1"/><polygon points="65.6,415.436 70.3,419.236 65.6,423.036" fill="#2a7194"/><line x1="55.3" y1="431.5" x2="61.5" y2="431.5" stroke="#c6c6c6" stroke-width="1" stroke-dasharray="1,1"/><polygon points="65.6,427.67199999999997 70.3,431.472 65.6,435.272" fill="#2a7194"/><line x1="55.3" y1="443.5" x2="61.5" y2="443.5" stroke="#c6c6c6" stroke-width="1" stroke-dasharray="1,1"/><polygon points="65.6,439.90799999999996 70.3,443.70799999999997 65.6,447.508" fill="#2a7194"/><line x1="55.3" y1="455.5" x2="61.5" y2="455.5" stroke="#c6c6c6" stroke-width="1" stroke-dasharray="1,1"/><polygon points="65.6,452.14399999999995 70.3,455.94399999999996 65.6,459.74399999999997" fill="#2a7194"/><line x1="55.3" y1="468.5" x2="61.5" y2="468.5" stroke="#c6c6c6" stroke-width="1" stroke-dasharray="1,1"/><polygon points="65.6,464.38000000000005 70.3,468.18000000000006 65.6,471.9800000000001" fill="#2a7194"/><line x1="55.3" y1="480.5" x2="61.5" y2="480.5" stroke="#c6c6c6" stroke-width="1" stroke-dasharray="1,1"/><polygon points="65.6,476.61600000000004 70.3,480.41600000000005 65.6,484.21600000000007" fill="#2a7194"/><line x1="55.3" y1="492.5" x2="61.5" y2="492.5" stroke="#c6c6c6" stroke-width="1" stroke-dasharray="1,1"/><polygon points="65.6,488.85200000000003 70.3,492.65200000000004 65.6,496.45200000000006" fill="#2a7194"/><line x1="55.3" y1="504.5" x2="61.5" y2="504.5" stroke="#c6c6c6" stroke-width="1" stroke-dasharray="1,1"/><polygon points="65.6,501.088 70.3,504.88800000000003 65.6,508.68800000000005" fill="#2a7194"/><line x1="55.3" y1="517.5" x2="61.5" y2="517.5" stroke="#c6c6c6" stroke-width="1" stroke-dasharray="1,1"/><polygon points="65.6,513.3240000000001 70.3,517.124 65.6,520.924" fill="#2a7194"/><line x1="58.0" y1="529.5" x2="62.0" y2="529.5" stroke="#c6c6c6" stroke-width="1" stroke-dasharray="1,1"/><rect x="52.0" y="526.36" width="6" height="6" fill="#fafafa" stroke="#a9a9a9" stroke-width=".8"/><line x1="53.2" y1="529.36" x2="56.8" y2="529.36" stroke="#3050a0" stroke-width=".8"/><line x1="55.0" y1="527.5600000000001" x2="55.0" y2="531.16" stroke="#3050a0" stroke-width=".8"/><path d="M62.199999999999996,525.76 h4 l1,1.2 h5.6 v7 h-10.6 z" fill="#3d8db5"/><rect x="62.199999999999996" y="527.16" width="10.6" height="6.3" fill="url(#fg)"/><line x1="58.0" y1="541.5" x2="62.0" y2="541.5" stroke="#c6c6c6" stroke-width="1" stroke-dasharray="1,1"/><rect x="52.0" y="538.596" width="6" height="6" fill="#fafafa" stroke="#a9a9a9" stroke-width=".8"/><line x1="53.2" y1="541.596" x2="56.8" y2="541.596" stroke="#3050a0" stroke-width=".8"/><line x1="55.0" y1="539.796" x2="55.0" y2="543.396" stroke="#3050a0" stroke-width=".8"/><path d="M62.199999999999996,537.996 h4 l1,1.2 h5.6 v7 h-10.6 z" fill="#3d8db5"/><rect x="62.199999999999996" y="539.396" width="10.6" height="6.3" fill="url(#fg)"/><line x1="44.6" y1="553.5" x2="48.6" y2="553.5" stroke="#c6c6c6" stroke-width="1" stroke-dasharray="1,1"/><rect x="38.6" y="550.832" width="6" height="6" fill="#fafafa" stroke="#a9a9a9" stroke-width=".8"/><line x1="39.800000000000004" y1="553.832" x2="43.4" y2="553.832" stroke="#3050a0" stroke-width=".8"/><line x1="41.6" y1="552.032" x2="41.6" y2="555.632" stroke="#3050a0" stroke-width=".8"/><path d="M48.9,550.232 h4 l1,1.2 h5.6 v7 h-10.6 z" fill="#3d8db5"/><rect x="48.9" y="551.632" width="10.6" height="6.3" fill="url(#fg)"/><line x1="44.6" y1="566.5" x2="48.6" y2="566.5" stroke="#c6c6c6" stroke-width="1" stroke-dasharray="1,1"/><rect x="38.6" y="563.068" width="6" height="6" fill="#fafafa" stroke="#a9a9a9" stroke-width=".8"/><line x1="39.800000000000004" y1="566.068" x2="43.4" y2="566.068" stroke="#3050a0" stroke-width=".8"/><line x1="41.6" y1="564.268" x2="41.6" y2="567.8679999999999" stroke="#3050a0" stroke-width=".8"/><path d="M48.9,562.468 h4 l1,1.2 h5.6 v7 h-10.6 z" fill="#3d8db5"/><rect x="48.9" y="563.8679999999999" width="10.6" height="6.3" fill="url(#fg)"/><line x1="44.6" y1="578.5" x2="48.6" y2="578.5" stroke="#c6c6c6" stroke-width="1" stroke-dasharray="1,1"/><rect x="38.6" y="575.304" width="6" height="6" fill="#fafafa" stroke="#a9a9a9" stroke-width=".8"/><line x1="39.800000000000004" y1="578.304" x2="43.4" y2="578.304" stroke="#3050a0" stroke-width=".8"/><line x1="41.6" y1="576.504" x2="41.6" y2="580.1039999999999" stroke="#3050a0" stroke-width=".8"/><path d="M48.9,574.704 h4 l1,1.2 h5.6 v7 h-10.6 z" fill="#3d8db5"/><rect x="48.9" y="576.1039999999999" width="10.6" height="6.3" fill="url(#fg)"/><line x1="44.6" y1="590.5" x2="48.6" y2="590.5" stroke="#c6c6c6" stroke-width="1" stroke-dasharray="1,1"/><rect x="38.6" y="587.5400000000001" width="6" height="6" fill="#fafafa" stroke="#a9a9a9" stroke-width=".8"/><line x1="39.800000000000004" y1="590.5400000000001" x2="43.4" y2="590.5400000000001" stroke="#3050a0" stroke-width=".8"/><line x1="41.6" y1="588.7400000000001" x2="41.6" y2="592.34" stroke="#3050a0" stroke-width=".8"/><path d="M48.9,586.94 h4 l1,1.2 h5.6 v7 h-10.6 z" fill="#3d8db5"/><rect x="48.9" y="588.34" width="10.6" height="6.3" fill="url(#fg)"/><line x1="44.6" y1="602.5" x2="48.6" y2="602.5" stroke="#c6c6c6" stroke-width="1" stroke-dasharray="1,1"/><rect x="38.6" y="599.7760000000001" width="6" height="6" fill="#fafafa" stroke="#a9a9a9" stroke-width=".8"/><line x1="39.800000000000004" y1="602.7760000000001" x2="43.4" y2="602.7760000000001" stroke="#3050a0" stroke-width=".8"/><line x1="41.6" y1="600.9760000000001" x2="41.6" y2="604.576" stroke="#3050a0" stroke-width=".8"/><path d="M48.9,599.176 h4 l1,1.2 h5.6 v7 h-10.6 z" fill="#3d8db5"/><rect x="48.9" y="600.576" width="10.6" height="6.3" fill="url(#fg)"/><line x1="44.6" y1="615.5" x2="48.6" y2="615.5" stroke="#c6c6c6" stroke-width="1" stroke-dasharray="1,1"/><rect x="38.6" y="612.0120000000001" width="6" height="6" fill="#fafafa" stroke="#a9a9a9" stroke-width=".8"/><line x1="39.800000000000004" y1="615.0120000000001" x2="43.4" y2="615.0120000000001" stroke="#3050a0" stroke-width=".8"/><line x1="41.6" y1="613.2120000000001" x2="41.6" y2="616.812" stroke="#3050a0" stroke-width=".8"/><path d="M48.9,611.412 h4 l1,1.2 h5.6 v7 h-10.6 z" fill="#3d8db5"/><rect x="48.9" y="612.812" width="10.6" height="6.3" fill="url(#fg)"/><line x1="31.2" y1="627.5" x2="35.2" y2="627.5" stroke="#c6c6c6" stroke-width="1" stroke-dasharray="1,1"/><rect x="25.2" y="624.248" width="6" height="6" fill="#fafafa" stroke="#a9a9a9" stroke-width=".8"/><line x1="26.4" y1="627.248" x2="30.0" y2="627.248" stroke="#3050a0" stroke-width=".8"/><line x1="28.2" y1="625.4480000000001" x2="28.2" y2="629.048" stroke="#3050a0" stroke-width=".8"/><path d="M35.6,623.648 h4 l1,1.2 h5.6 v7 h-10.6 z" fill="#3d8db5"/><rect x="35.6" y="625.048" width="10.6" height="6.3" fill="url(#fg)"/><line x1="31.2" y1="639.5" x2="35.2" y2="639.5" stroke="#c6c6c6" stroke-width="1" stroke-dasharray="1,1"/><rect x="25.2" y="636.484" width="6" height="6" fill="#fafafa" stroke="#a9a9a9" stroke-width=".8"/><line x1="26.4" y1="639.484" x2="30.0" y2="639.484" stroke="#3050a0" stroke-width=".8"/><line x1="28.2" y1="637.6840000000001" x2="28.2" y2="641.284" stroke="#3050a0" stroke-width=".8"/><path d="M35.6,635.884 h4 l1,1.2 h5.6 v7 h-10.6 z" fill="#3d8db5"/><rect x="35.6" y="637.284" width="10.6" height="6.3" fill="url(#fg)"/><line x1="31.2" y1="651.5" x2="35.2" y2="651.5" stroke="#c6c6c6" stroke-width="1" stroke-dasharray="1,1"/><rect x="25.2" y="648.72" width="6" height="6" fill="#fafafa" stroke="#a9a9a9" stroke-width=".8"/><line x1="26.4" y1="651.72" x2="30.0" y2="651.72" stroke="#3050a0" stroke-width=".8"/><line x1="28.2" y1="649.9200000000001" x2="28.2" y2="653.52" stroke="#3050a0" stroke-width=".8"/><path d="M35.6,648.12 h4 l1,1.2 h5.6 v7 h-10.6 z" fill="#3d8db5"/><rect x="35.6" y="649.52" width="10.6" height="6.3" fill="url(#fg)"/><line x1="31.2" y1="663.5" x2="35.2" y2="663.5" stroke="#c6c6c6" stroke-width="1" stroke-dasharray="1,1"/><rect x="25.2" y="660.956" width="6" height="6" fill="#fafafa" stroke="#a9a9a9" stroke-width=".8"/><line x1="26.4" y1="663.956" x2="30.0" y2="663.956" stroke="#3050a0" stroke-width=".8"/><line x1="28.2" y1="662.1560000000001" x2="28.2" y2="665.756" stroke="#3050a0" stroke-width=".8"/><path d="M35.6,660.356 h4 l1,1.2 h5.6 v7 h-10.6 z" fill="#3d8db5"/><rect x="35.6" y="661.756" width="10.6" height="6.3" fill="url(#fg)"/><line x1="31.2" y1="676.5" x2="35.2" y2="676.5" stroke="#c6c6c6" stroke-width="1" stroke-dasharray="1,1"/><rect x="25.2" y="673.192" width="6" height="6" fill="#fafafa" stroke="#a9a9a9" stroke-width=".8"/><line x1="26.4" y1="676.192" x2="30.0" y2="676.192" stroke="#3050a0" stroke-width=".8"/><line x1="28.2" y1="674.392" x2="28.2" y2="677.992" stroke="#3050a0" stroke-width=".8"/><path d="M35.6,672.592 h4 l1,1.2 h5.6 v7 h-10.6 z" fill="#3d8db5"/><rect x="35.6" y="673.992" width="10.6" height="6.3" fill="url(#fg)"/><line x1="31.2" y1="688.5" x2="35.2" y2="688.5" stroke="#c6c6c6" stroke-width="1" stroke-dasharray="1,1"/><rect x="25.2" y="685.428" width="6" height="6" fill="#fafafa" stroke="#a9a9a9" stroke-width=".8"/><line x1="26.4" y1="688.428" x2="30.0" y2="688.428" stroke="#3050a0" stroke-width=".8"/><line x1="28.2" y1="686.628" x2="28.2" y2="690.228" stroke="#3050a0" stroke-width=".8"/><path d="M35.6,684.828 h4 l1,1.2 h5.6 v7 h-10.6 z" fill="#3d8db5"/><rect x="35.6" y="686.228" width="10.6" height="6.3" fill="url(#fg)"/><line x1="31.2" y1="700.5" x2="35.2" y2="700.5" stroke="#c6c6c6" stroke-width="1" stroke-dasharray="1,1"/><rect x="25.2" y="697.6640000000001" width="6" height="6" fill="#fafafa" stroke="#a9a9a9" stroke-width=".8"/><line x1="26.4" y1="700.6640000000001" x2="30.0" y2="700.6640000000001" stroke="#3050a0" stroke-width=".8"/><line x1="28.2" y1="698.8640000000001" x2="28.2" y2="702.464" stroke="#3050a0" stroke-width=".8"/><path d="M35.6,697.0640000000001 h4 l1,1.2 h5.6 v7 h-10.6 z" fill="#3d8db5"/><rect x="35.6" y="698.464" width="10.6" height="6.3" fill="url(#fg)"/><line x1="31.2" y1="712.5" x2="35.2" y2="712.5" stroke="#c6c6c6" stroke-width="1" stroke-dasharray="1,1"/><rect x="25.2" y="709.9000000000001" width="6" height="6" fill="#fafafa" stroke="#a9a9a9" stroke-width=".8"/><line x1="26.4" y1="712.9000000000001" x2="30.0" y2="712.9000000000001" stroke="#3050a0" stroke-width=".8"/><line x1="28.2" y1="711.1000000000001" x2="28.2" y2="714.7" stroke="#3050a0" stroke-width=".8"/><path d="M35.6,709.3000000000001 h4 l1,1.2 h5.6 v7 h-10.6 z" fill="#3d8db5"/><rect x="35.6" y="710.7" width="10.6" height="6.3" fill="url(#fg)"/><line x1="31.2" y1="725.5" x2="35.2" y2="725.5" stroke="#c6c6c6" stroke-width="1" stroke-dasharray="1,1"/><rect x="25.2" y="722.1360000000001" width="6" height="6" fill="#fafafa" stroke="#a9a9a9" stroke-width=".8"/><line x1="26.4" y1="725.1360000000001" x2="30.0" y2="725.1360000000001" stroke="#3050a0" stroke-width=".8"/><line x1="28.2" y1="723.3360000000001" x2="28.2" y2="726.936" stroke="#3050a0" stroke-width=".8"/><path d="M35.6,721.5360000000001 h4 l1,1.2 h5.6 v7 h-10.6 z" fill="#3d8db5"/><rect x="35.6" y="722.936" width="10.6" height="6.3" fill="url(#fg)"/></svg>
<div style="left:251.20px;top:47.80px;width:916.80px;height:680.20px;background:#034a96;"></div>
<div style="left:284.40px;top:47.80px;width:1.20px;height:680.20px;background:rgba(225,236,248,0.85);"></div>
<div style="left:379.10px;top:47.80px;width:1.20px;height:680.20px;background:rgba(225,236,248,0.85);"></div>
<div style="left:473.80px;top:47.80px;width:1.20px;height:680.20px;background:rgba(225,236,248,0.85);"></div>
<div style="left:568.50px;top:47.80px;width:1.20px;height:680.20px;background:rgba(225,236,248,0.85);"></div>
<div style="left:663.20px;top:47.80px;width:1.20px;height:680.20px;background:rgba(225,236,248,0.85);"></div>
<div style="left:757.90px;top:47.80px;width:1.20px;height:680.20px;background:rgba(225,236,248,0.85);"></div>
<div style="left:852.60px;top:47.80px;width:1.20px;height:680.20px;background:rgba(225,236,248,0.85);"></div>
<div style="left:947.30px;top:47.80px;width:1.20px;height:680.20px;background:rgba(225,236,248,0.85);"></div>
<div style="left:251.20px;top:144.40px;width:916.80px;height:1.20px;background:rgba(225,236,248,0.85);"></div>
<div style="left:251.20px;top:241.50px;width:916.80px;height:1.20px;background:rgba(225,236,248,0.85);"></div>
<div style="left:251.20px;top:338.60px;width:916.80px;height:1.20px;background:rgba(225,236,248,0.85);"></div>
<div style="left:251.20px;top:435.70px;width:916.80px;height:1.20px;background:rgba(225,236,248,0.85);"></div>
<div style="left:251.20px;top:532.80px;width:916.80px;height:1.20px;background:rgba(225,236,248,0.85);"></div>
<div style="left:251.20px;top:629.90px;width:916.80px;height:1.20px;background:rgba(225,236,248,0.85);"></div>
<div style="left:251.20px;top:727.00px;width:916.80px;height:1.20px;background:rgba(225,236,248,0.85);"></div>
<div style="left:1042.2px;top:47.8px;width:31px;height:680.2px;background-color:#034a96;background-image:repeating-linear-gradient(90deg,rgba(225,236,248,.85) 0 1px,transparent 1px 6px),repeating-linear-gradient(180deg,rgba(225,236,248,.85) 0 1px,transparent 1px 6px);background-position:0 0.7px;"></div>
<div style="left:1048.70px;top:47.80px;width:24.40px;height:97.20px;background:#ffffff;"></div>
<div style="left:1049.50px;top:72.20px;width:5.00px;height:5.20px;background:#034a96;"></div>
<div style="left:1055.50px;top:72.20px;width:5.00px;height:5.20px;background:#034a96;"></div>
<div style="left:1061.50px;top:72.20px;width:5.00px;height:5.20px;background:#034a96;"></div>
<div style="left:1067.50px;top:72.20px;width:5.00px;height:5.20px;background:#034a96;"></div>
<div style="left:1073.00px;top:47.80px;width:94.00px;height:97.20px;background:#034a96;"></div>
<div style="left:1166.60px;top:47.80px;width:1.40px;height:680.20px;background:#d0d0d0;"></div>
<svg style="position:absolute;left:0;top:0" width="1168" height="730"><defs><clipPath id="bgc"><rect x="251.2" y="47.8" width="916.8" height="680.2"/></clipPath></defs><g clip-path="url(#bgc)"><circle cx="995.5" cy="96.8" r="47.2" fill="#fff"/><circle cx="995.8" cy="96.6" r="25.2" fill="#034a96"/><rect x="995.2" y="71" width="1.2" height="52" fill="#fff"/><rect x="970" y="96" width="51" height="1.2" fill="#fff"/><polygon points="1013,96.8 1042.5,127.7 1026,144.3 995.8,114" fill="#fff"/></g></svg>
<div class="t" style="left:1078.40px;top:53.00px;font:bold 13.3px/16px 'Liberation Sans',sans-serif;color:#fff;letter-spacing:0.050px;">CENTRÁLNY</div>
<div class="t" style="left:1078.40px;top:68.00px;font:bold 13.3px/16px 'Liberation Sans',sans-serif;color:#fff;letter-spacing:1.300px;">MOZOG</div>
<div class="t" style="left:1078.40px;top:83.00px;font:bold 13.3px/16px 'Liberation Sans',sans-serif;color:#fff;letter-spacing:0.300px;">FIRMY</div>
<div style="left:0.00px;top:728.00px;width:1168.00px;height:2.00px;background:#151515;"></div>
<div class="t" style="left:299.85px;top:599.00px;font:normal 8.0px/10px 'Liberation Sans',sans-serif;color:#dfe8f4;letter-spacing:0.000px;transform:scaleX(0.8726);transform-origin:0 50%;">Saldokontná kniha -</div>
<div class="t" style="left:316.15px;top:608.00px;font:normal 8.0px/10px 'Liberation Sans',sans-serif;color:#dfe8f4;letter-spacing:0.000px;transform:scaleX(0.8412);transform-origin:0 50%;">položková</div>
<div class="t" style="left:399.90px;top:602.00px;font:normal 8.0px/10px 'Liberation Sans',sans-serif;color:#dfe8f4;letter-spacing:0.000px;transform:scaleX(0.8560);transform-origin:0 50%;">Účtovný denník</div>
<div class="t" style="left:492.25px;top:604.00px;font:normal 8.0px/10px 'Liberation Sans',sans-serif;color:#dfe8f4;letter-spacing:0.000px;transform:scaleX(0.8782);transform-origin:0 50%;">Žiadosti o zaúčtovanie</div>
<div class="t" style="left:309.80px;top:698.00px;font:normal 8.0px/10px 'Liberation Sans',sans-serif;color:#dfe8f4;letter-spacing:0.000px;transform:scaleX(0.8770);transform-origin:0 50%;">Konfigurácia</div>
<div class="t" style="left:311.55px;top:707.00px;font:normal 8.0px/10px 'Liberation Sans',sans-serif;color:#dfe8f4;letter-spacing:0.000px;transform:scaleX(0.8774);transform-origin:0 50%;">účtovníctva</div>
<div class="t" style="left:397.30px;top:696.00px;font:normal 8.0px/10px 'Liberation Sans',sans-serif;color:#dfe8f4;letter-spacing:0.000px;transform:scaleX(0.8815);transform-origin:0 50%;">Zoznam rozpočtov</div>
<div class="t" style="left:488.05px;top:695.00px;font:normal 8.0px/10px 'Liberation Sans',sans-serif;color:#dfe8f4;letter-spacing:0.000px;transform:scaleX(0.8895);transform-origin:0 50%;">Saldokontná kniha -</div>
<div class="t" style="left:504.05px;top:704.00px;font:normal 8.0px/10px 'Liberation Sans',sans-serif;color:#dfe8f4;letter-spacing:0.000px;transform:scaleX(0.8578);transform-origin:0 50%;">položková</div>
<svg style="position:absolute;left:0;top:0" width="1168" height="730"><defs><linearGradient id="rf" x1="0" y1="0" x2="0" y2="1"><stop offset="0" stop-color="#7f95b8" stop-opacity=".45"/><stop offset="1" stop-color="#7f95b8" stop-opacity="0"/></linearGradient></defs><rect x="331.3" y="587.5" width="21.6" height="6" fill="url(#rf)"/><rect x="310" y="587.5" width="10" height="5" fill="url(#rf)"/><polygon points="320.8,554.6 330.7,557.5 319.1,587.1 309.2,583.7" fill="#e8141c"/><polygon points="322.2,559 327.6,560.6 323.8,570.6 318.4,569" fill="#fff"/><circle cx="314.9" cy="580.6" r="2.2" fill="#333"/><rect x="331.3" y="554.6" width="9.9" height="32.5" rx="1" fill="#d9d9d9"/><rect x="333.3" y="557.5" width="5.9" height="12" fill="#fff"/><circle cx="336.3" cy="581.8" r="2.1" fill="#3a3a3a"/><rect x="343" y="554.6" width="9.9" height="32.5" rx="1" fill="#b3b3b3"/><rect x="345" y="557.5" width="5.9" height="12" fill="#f2f2f2"/><circle cx="348" cy="581.8" r="2.1" fill="#3a3a3a"/><path d="M335.5,560 v7 M336.8,560 v7" stroke="#555" stroke-width=".5"/><path d="M347.2,560 v7 M348.5,560 v7" stroke="#555" stroke-width=".5"/><rect x="418.5" y="561" width="22" height="26" rx="2" fill="#0a56a8" stroke="#c4c4c4" stroke-width="2"/><polygon points="434,587.5 441.5,580 441.5,587.5" fill="#c4c4c4"/><path d="M422.5,567 q1,-1.5 2,0 t2,0 t2,0 t2,0 M422.5,573 q1,-1.5 2,0 t2,0 t2,0 t2,0 M422.5,579 q1,-1.5 2,0 t2,0 t2,0" stroke="#c8daf0" stroke-width=".7" fill="none"/><circle cx="411.8" cy="570.6" r="4.2" fill="#7a7a7a"/><circle cx="410.6" cy="569.2" r="1.6" fill="#a8a8a8"/><path d="M403.2,590.2 L403.8,579.5 Q404.5,576.5 408,576.2 L410.5,576.2 L410.5,590.2 Z" fill="#6a6a6a"/><path d="M420.4,590.2 L419.8,579.5 Q419.2,576.5 415.6,576.2 L413.2,576.2 L413.2,590.2 Z" fill="#5e5e5e"/><polygon points="410.5,576.5 413.2,576.5 413.8,585 411.85,589 409.9,585" fill="#1e90f0"/><path d="M429.5,580 L444.5,564.5" stroke="#6f6f6f" stroke-width="6.2"/><path d="M441.5,567.5 L446,563" stroke="#1e90f0" stroke-width="6.4"/><path d="M431,578.5 L434,575.5" stroke="#1e90f0" stroke-width="6.2"/><polygon points="426.7,577.2 432.5,583 425.2,585" fill="#1e90f0"/><path d="M432.5,575.2 L443,564.6" stroke="#a8a8a8" stroke-width="1.3"/><path d="M503.5,587.5 Q515,585.5 527.3,591.5 Q539.5,585.5 551,587.5 L549,589.5 Q539,588 527.3,593.3 Q515.5,588 505.5,589.5 Z" fill="#1e90f0"/><path d="M505.7,586.1 L512.9,564 Q520,562.5 527.3,567.1 L527.3,590.2 Q517,585 505.7,586.1 Z" fill="#d0d0d0"/><path d="M548.9,586.1 L541.7,564 Q534.5,562.5 527.3,567.1 L527.3,590.2 Q537.5,585 548.9,586.1 Z" fill="#c8c8c8"/><line x1="527.3" y1="567" x2="527.3" y2="590" stroke="#8a8a8a" stroke-width=".9"/><path d="M513,573 h9 M512,577 h6 M531.5,573 h4 M531.5,577 h3" stroke="#555" stroke-width="1.1"/><rect x="537" y="570.5" width="4.5" height="8" fill="#a8a8a8"/><path d="M318,675 L338,659" stroke="#6e6e6e" stroke-width="4.4"/><path d="M344.9,652.4 A5.2,5.2 0 1 0 344.9,660.6" stroke="#6e6e6e" stroke-width="4.2" fill="none"/><path d="M311.1,674.4 A5.2,5.2 0 1 1 311.1,682.6" stroke="#6e6e6e" stroke-width="4.2" fill="none"/><path d="M313,652 L327,666" stroke="#9a9a9a" stroke-width="1.8"/><polygon points="309.8,648.8 316,651.2 312.2,655" fill="#9a9a9a"/><path d="M328.5,666.5 L344.5,682.5" stroke="#52b852" stroke-width="8.6" stroke-linecap="round"/><path d="M333.5,673.5 l6.2,6.2 M335.8,671.2 l6.2,6.2 M338.1,668.9 l6.2,6.2" stroke="#2f7f2f" stroke-width=".8"/><path d="M326.5,669 q-1,-3 2,-4" stroke="#e8f8e8" stroke-width=".9" fill="none"/><path d="M436,675.5 L443.5,683" stroke="#40c040" stroke-width="3.6" stroke-linecap="round"/><circle cx="424.5" cy="664.1" r="15.2" fill="#f8f8f8" stroke="#b8b8b8" stroke-width="1.6"/><clipPath id="mgc"><circle cx="424.5" cy="664.1" r="14.4"/></clipPath><path clip-path="url(#mgc)" d="M408.5,670 L416.5,655 L424,671.5 L432,655 L440.5,670" stroke="#262626" stroke-width="4.2" fill="none" stroke-linejoin="round"/><path d="M403.5,661.5 q1.5,-3 3,0 M441.5,660 q1.5,3 3,0 q1.5,-3 3,0" stroke="#222" stroke-width=".9" fill="none"/><rect x="500.3" y="657" width="36.4" height="1.6" fill="#9a9a9a"/><rect x="500.3" y="670.2" width="36.4" height="1.6" fill="#9a9a9a"/><polygon points="506,646.5 509,647.2 505.5,657 502.5,656.3" fill="#1e90f0"/><rect x="510.5" y="646.5" width="3.2" height="10.5" fill="#e0e0e0"/><rect x="514" y="646.5" width="3.2" height="10.5" fill="#c8c8c8"/><rect x="523" y="653" width="11" height="4" fill="#e4e4e4"/><rect x="506" y="660" width="3" height="10.2" fill="#d8d8d8"/><rect x="510" y="660" width="3" height="10.2" fill="#e8e8e8"/><rect x="512.5" y="660" width="2" height="10.2" fill="#1e90f0"/><rect x="516" y="663.5" width="9" height="3" fill="#e0e0e0"/><rect x="516" y="667" width="9" height="3" fill="#c8c8c8"/><rect x="530" y="659.5" width="3.4" height="10.7" fill="#1e90f0"/><rect x="503.5" y="672" width="3.5" height="11" fill="#dcdcdc"/><rect x="507.5" y="672" width="3.5" height="11" fill="#b8b8b8"/><rect x="514.5" y="672" width="2.6" height="11" fill="#e6e6e6"/><polygon points="524.5,672 527.5,672.8 523,683 520.2,682.2" fill="#1e90f0"/><rect x="528.5" y="672" width="3.5" height="11" fill="#dcdcdc"/><rect x="532.2" y="672" width="3.5" height="11" fill="#b8b8b8"/></svg>
<div style="left:256.00px;top:50.80px;width:687.90px;height:457.70px;background:#ffffff;"></div>
<div style="left:256.00px;top:50.80px;width:687.90px;height:18.90px;background:#e9e9e9;"></div>
<div style="left:256.00px;top:50.80px;width:1.30px;height:457.70px;background:#c3d1e2;"></div>
<div class="t" style="left:273.70px;top:55.00px;font:bold 10.4px/12px 'Liberation Serif',sans-serif;color:#3b3b3b;letter-spacing:0.000px;transform:scaleX(0.9308);transform-origin:0 50%;">Žiadosti o zaúčtovanie</div>
<div class="t" style="left:876.30px;top:55.00px;font:bold 10.4px/12px 'Liberation Serif',sans-serif;color:#4a4a4a;letter-spacing:-0.200px;">32</div>
<div style="left:264.60px;top:88.00px;width:574.00px;height:393.00px;background:#f7fafe;"></div>
<div style="left:264.6px;top:88px;width:574px;height:393px;border:0.9px solid #dbe5f3;box-sizing:border-box"></div>
<div style="left:264.6px;top:75.4px;width:32.8px;height:13.5px;background:#f7fafe;border:0.9px solid #dbe5f3;border-bottom:none;box-sizing:border-box"></div>
<div class="t" style="left:268.70px;top:77.00px;font:normal 8px/10px 'Liberation Sans',sans-serif;color:#555;letter-spacing:0.000px;transform:scaleX(0.8652);transform-origin:0 50%;">Zoznam</div>
<div class="t" style="left:301.50px;top:77.00px;font:normal 8px/10px 'Liberation Sans',sans-serif;color:#3a4150;letter-spacing:0.000px;transform:scaleX(0.8556);transform-origin:0 50%;">Detail</div>
<div style="left:272.60px;top:96.40px;width:556.20px;height:374.90px;background:#ffffff;"></div>
<div style="left:272.6px;top:96.4px;width:556.1999999999999px;height:23.5px;background:linear-gradient(#fbfdff,#e9f0f8)"></div>
<div style="left:272.60px;top:119.90px;width:12.00px;height:11.73px;background:#fbfcfe;"></div>
<div style="left:284.60px;top:119.90px;width:107.80px;height:11.73px;background:#cadcf9;"></div>
<div style="left:392.40px;top:119.90px;width:67.20px;height:11.73px;background:#f3f8fe;"></div>
<div style="left:459.60px;top:119.90px;width:86.40px;height:11.73px;background:#cadcf9;"></div>
<div style="left:546.00px;top:119.90px;width:143.30px;height:11.73px;background:#f3f8fe;"></div>
<div style="left:689.30px;top:119.90px;width:45.00px;height:11.73px;background:#cadcf9;"></div>
<div style="left:734.30px;top:119.90px;width:45.10px;height:11.73px;background:#f3f8fe;"></div>
<div style="left:779.40px;top:119.90px;width:37.80px;height:11.73px;background:#f3f8fe;"></div>
<div class="t" style="left:286.20px;top:122.00px;font:normal 7.9px/10px 'Liberation Sans',sans-serif;color:#333;letter-spacing:0.000px;-webkit-text-stroke:0.18px #333;transform:scaleX(0.8810);transform-origin:0 50%;">OP-2023-103-000001</div>
<div class="t" style="left:394.00px;top:122.00px;font:normal 7.9px/10px 'Liberation Sans',sans-serif;color:#333;letter-spacing:0.000px;-webkit-text-stroke:0.18px #333;transform:scaleX(0.8810);transform-origin:0 50%;">24.03.2023</div>
<div class="t" style="left:461.60px;top:122.00px;font:normal 7.9px/10px 'Liberation Sans',sans-serif;color:#333;letter-spacing:0.000px;-webkit-text-stroke:0.18px #333;transform:scaleX(0.8810);transform-origin:0 50%;">3103000001</div>
<div class="t" style="left:548.00px;top:122.00px;font:normal 7.9px/10px 'Liberation Sans',sans-serif;color:#333;letter-spacing:0.000px;-webkit-text-stroke:0.18px #333;transform:scaleX(0.8810);transform-origin:0 50%;">DPH</div>
<div class="t" style="left:701.64px;top:122.00px;font:normal 7.9px/10px 'Liberation Sans',sans-serif;color:#333;letter-spacing:0.000px;-webkit-text-stroke:0.18px #333;transform:scaleX(0.8810);transform-origin:0 50%;">48 460,00</div>
<div style="left:272.60px;top:131.58px;width:12.00px;height:11.73px;background:#fbfcfe;"></div>
<div style="left:284.60px;top:131.58px;width:107.80px;height:11.73px;background:#dde9fc;"></div>
<div style="left:392.40px;top:131.58px;width:67.20px;height:11.73px;background:#ffffff;"></div>
<div style="left:459.60px;top:131.58px;width:86.40px;height:11.73px;background:#dde9fc;"></div>
<div style="left:546.00px;top:131.58px;width:143.30px;height:11.73px;background:#ffffff;"></div>
<div style="left:689.30px;top:131.58px;width:45.00px;height:11.73px;background:#dde9fc;"></div>
<div style="left:734.30px;top:131.58px;width:45.10px;height:11.73px;background:#ffffff;"></div>
<div style="left:779.40px;top:131.58px;width:37.80px;height:11.73px;background:#ffffff;"></div>
<div class="t" style="left:286.20px;top:133.00px;font:normal 7.9px/10px 'Liberation Sans',sans-serif;color:#333;letter-spacing:0.000px;-webkit-text-stroke:0.18px #333;transform:scaleX(0.8810);transform-origin:0 50%;">OP-2023-103-000002</div>
<div class="t" style="left:394.00px;top:133.00px;font:normal 7.9px/10px 'Liberation Sans',sans-serif;color:#333;letter-spacing:0.000px;-webkit-text-stroke:0.18px #333;transform:scaleX(0.8810);transform-origin:0 50%;">01.03.2023</div>
<div class="t" style="left:461.60px;top:133.00px;font:normal 7.9px/10px 'Liberation Sans',sans-serif;color:#333;letter-spacing:0.000px;-webkit-text-stroke:0.18px #333;transform:scaleX(0.8810);transform-origin:0 50%;">3103000002</div>
<div class="t" style="left:548.00px;top:133.00px;font:normal 7.9px/10px 'Liberation Sans',sans-serif;color:#333;letter-spacing:0.000px;-webkit-text-stroke:0.18px #333;transform:scaleX(0.8810);transform-origin:0 50%;">Ostatná pohľadávka</div>
<div class="t" style="left:701.64px;top:133.00px;font:normal 7.9px/10px 'Liberation Sans',sans-serif;color:#333;letter-spacing:0.000px;-webkit-text-stroke:0.18px #333;transform:scaleX(0.8810);transform-origin:0 50%;">65 300,00</div>
<div style="left:272.60px;top:143.26px;width:12.00px;height:11.73px;background:#fbfcfe;"></div>
<div style="left:284.60px;top:143.26px;width:107.80px;height:11.73px;background:#cadcf9;"></div>
<div style="left:392.40px;top:143.26px;width:67.20px;height:11.73px;background:#f3f8fe;"></div>
<div style="left:459.60px;top:143.26px;width:86.40px;height:11.73px;background:#cadcf9;"></div>
<div style="left:546.00px;top:143.26px;width:143.30px;height:11.73px;background:#f3f8fe;"></div>
<div style="left:689.30px;top:143.26px;width:45.00px;height:11.73px;background:#cadcf9;"></div>
<div style="left:734.30px;top:143.26px;width:45.10px;height:11.73px;background:#f3f8fe;"></div>
<div style="left:779.40px;top:143.26px;width:37.80px;height:11.73px;background:#f3f8fe;"></div>
<div class="t" style="left:286.20px;top:145.00px;font:normal 7.9px/10px 'Liberation Sans',sans-serif;color:#333;letter-spacing:0.000px;-webkit-text-stroke:0.18px #333;transform:scaleX(0.8810);transform-origin:0 50%;">OP-2023-103-000002</div>
<div class="t" style="left:394.00px;top:145.00px;font:normal 7.9px/10px 'Liberation Sans',sans-serif;color:#333;letter-spacing:0.000px;-webkit-text-stroke:0.18px #333;transform:scaleX(0.8810);transform-origin:0 50%;">01.03.2023</div>
<div class="t" style="left:461.60px;top:145.00px;font:normal 7.9px/10px 'Liberation Sans',sans-serif;color:#333;letter-spacing:0.000px;-webkit-text-stroke:0.18px #333;transform:scaleX(0.8810);transform-origin:0 50%;">3103000002</div>
<div class="t" style="left:548.00px;top:145.00px;font:normal 7.9px/10px 'Liberation Sans',sans-serif;color:#333;letter-spacing:0.000px;-webkit-text-stroke:0.18px #333;transform:scaleX(0.8810);transform-origin:0 50%;">DPH</div>
<div class="t" style="left:701.64px;top:145.00px;font:normal 7.9px/10px 'Liberation Sans',sans-serif;color:#333;letter-spacing:0.000px;-webkit-text-stroke:0.18px #333;transform:scaleX(0.8810);transform-origin:0 50%;">13 060,00</div>
<div style="left:272.60px;top:154.94px;width:12.00px;height:11.73px;background:#fbfcfe;"></div>
<div style="left:284.60px;top:154.94px;width:107.80px;height:11.73px;background:#dde9fc;"></div>
<div style="left:392.40px;top:154.94px;width:67.20px;height:11.73px;background:#ffffff;"></div>
<div style="left:459.60px;top:154.94px;width:86.40px;height:11.73px;background:#dde9fc;"></div>
<div style="left:546.00px;top:154.94px;width:143.30px;height:11.73px;background:#ffffff;"></div>
<div style="left:689.30px;top:154.94px;width:45.00px;height:11.73px;background:#dde9fc;"></div>
<div style="left:734.30px;top:154.94px;width:45.10px;height:11.73px;background:#ffffff;"></div>
<div style="left:779.40px;top:154.94px;width:37.80px;height:11.73px;background:#ffffff;"></div>
<div class="t" style="left:286.20px;top:157.00px;font:normal 7.9px/10px 'Liberation Sans',sans-serif;color:#333;letter-spacing:0.000px;-webkit-text-stroke:0.18px #333;transform:scaleX(0.8810);transform-origin:0 50%;">PP-2023-300-1-000001</div>
<div class="t" style="left:394.00px;top:157.00px;font:normal 7.9px/10px 'Liberation Sans',sans-serif;color:#333;letter-spacing:0.000px;-webkit-text-stroke:0.18px #333;transform:scaleX(0.8810);transform-origin:0 50%;">24.03.2023</div>
<div class="t" style="left:461.60px;top:157.00px;font:normal 7.9px/10px 'Liberation Sans',sans-serif;color:#333;letter-spacing:0.000px;-webkit-text-stroke:0.18px #333;transform:scaleX(0.8810);transform-origin:0 50%;">2103000001</div>
<div class="t" style="left:548.00px;top:157.00px;font:normal 7.9px/10px 'Liberation Sans',sans-serif;color:#333;letter-spacing:0.000px;-webkit-text-stroke:0.18px #333;transform:scaleX(0.8810);transform-origin:0 50%;">Úhrada dokladu  OP-2022-103-000001</div>
<div class="t" style="left:701.64px;top:157.00px;font:normal 7.9px/10px 'Liberation Sans',sans-serif;color:#333;letter-spacing:0.000px;-webkit-text-stroke:0.18px #333;transform:scaleX(0.8810);transform-origin:0 50%;">35 000,00</div>
<div class="t" style="left:735.80px;top:157.00px;font:normal 7.9px/10px 'Liberation Sans',sans-serif;color:#333;letter-spacing:0.000px;-webkit-text-stroke:0.18px #333;transform:scaleX(0.8810);transform-origin:0 50%;">211100</div>
<div style="left:272.60px;top:166.62px;width:12.00px;height:11.73px;background:#fbfcfe;"></div>
<div style="left:284.60px;top:166.62px;width:107.80px;height:11.73px;background:#cadcf9;"></div>
<div style="left:392.40px;top:166.62px;width:67.20px;height:11.73px;background:#f3f8fe;"></div>
<div style="left:459.60px;top:166.62px;width:86.40px;height:11.73px;background:#cadcf9;"></div>
<div style="left:546.00px;top:166.62px;width:143.30px;height:11.73px;background:#f3f8fe;"></div>
<div style="left:689.30px;top:166.62px;width:45.00px;height:11.73px;background:#cadcf9;"></div>
<div style="left:734.30px;top:166.62px;width:45.10px;height:11.73px;background:#f3f8fe;"></div>
<div style="left:779.40px;top:166.62px;width:37.80px;height:11.73px;background:#f3f8fe;"></div>
<div class="t" style="left:286.20px;top:168.00px;font:normal 7.9px/10px 'Liberation Sans',sans-serif;color:#333;letter-spacing:0.000px;-webkit-text-stroke:0.18px #333;transform:scaleX(0.8810);transform-origin:0 50%;">OZ-2023-104-000002</div>
<div class="t" style="left:394.00px;top:168.00px;font:normal 7.9px/10px 'Liberation Sans',sans-serif;color:#333;letter-spacing:0.000px;-webkit-text-stroke:0.18px #333;transform:scaleX(0.8810);transform-origin:0 50%;">20.01.2023</div>
<div class="t" style="left:461.60px;top:168.00px;font:normal 7.9px/10px 'Liberation Sans',sans-serif;color:#333;letter-spacing:0.000px;-webkit-text-stroke:0.18px #333;transform:scaleX(0.8810);transform-origin:0 50%;">216565465</div>
<div class="t" style="left:548.00px;top:168.00px;font:normal 7.9px/10px 'Liberation Sans',sans-serif;color:#333;letter-spacing:0.000px;-webkit-text-stroke:0.18px #333;transform:scaleX(0.8810);transform-origin:0 50%;">Ost. záväzok</div>
<div class="t" style="left:701.64px;top:168.00px;font:normal 7.9px/10px 'Liberation Sans',sans-serif;color:#333;letter-spacing:0.000px;-webkit-text-stroke:0.18px #333;transform:scaleX(0.8810);transform-origin:0 50%;">35 200,00</div>
<div style="left:272.60px;top:178.30px;width:12.00px;height:11.73px;background:#fbfcfe;"></div>
<div style="left:284.60px;top:178.30px;width:107.80px;height:11.73px;background:#dde9fc;"></div>
<div style="left:392.40px;top:178.30px;width:67.20px;height:11.73px;background:#ffffff;"></div>
<div style="left:459.60px;top:178.30px;width:86.40px;height:11.73px;background:#dde9fc;"></div>
<div style="left:546.00px;top:178.30px;width:143.30px;height:11.73px;background:#ffffff;"></div>
<div style="left:689.30px;top:178.30px;width:45.00px;height:11.73px;background:#dde9fc;"></div>
<div style="left:734.30px;top:178.30px;width:45.10px;height:11.73px;background:#ffffff;"></div>
<div style="left:779.40px;top:178.30px;width:37.80px;height:11.73px;background:#ffffff;"></div>
<div class="t" style="left:286.20px;top:180.00px;font:normal 7.9px/10px 'Liberation Sans',sans-serif;color:#333;letter-spacing:0.000px;-webkit-text-stroke:0.18px #333;transform:scaleX(0.8810);transform-origin:0 50%;">OZ-2023-104-000002</div>
<div class="t" style="left:394.00px;top:180.00px;font:normal 7.9px/10px 'Liberation Sans',sans-serif;color:#333;letter-spacing:0.000px;-webkit-text-stroke:0.18px #333;transform:scaleX(0.8810);transform-origin:0 50%;">20.01.2023</div>
<div class="t" style="left:461.60px;top:180.00px;font:normal 7.9px/10px 'Liberation Sans',sans-serif;color:#333;letter-spacing:0.000px;-webkit-text-stroke:0.18px #333;transform:scaleX(0.8810);transform-origin:0 50%;">216565465</div>
<div class="t" style="left:548.00px;top:180.00px;font:normal 7.9px/10px 'Liberation Sans',sans-serif;color:#333;letter-spacing:0.000px;-webkit-text-stroke:0.18px #333;transform:scaleX(0.8810);transform-origin:0 50%;">DPH</div>
<div class="t" style="left:705.51px;top:180.00px;font:normal 7.9px/10px 'Liberation Sans',sans-serif;color:#333;letter-spacing:0.000px;-webkit-text-stroke:0.18px #333;transform:scaleX(0.8810);transform-origin:0 50%;">7 040,00</div>
<div style="left:272.60px;top:189.98px;width:12.00px;height:11.73px;background:#fbfcfe;"></div>
<div style="left:284.60px;top:189.98px;width:107.80px;height:11.73px;background:#cadcf9;"></div>
<div style="left:392.40px;top:189.98px;width:67.20px;height:11.73px;background:#f3f8fe;"></div>
<div style="left:459.60px;top:189.98px;width:86.40px;height:11.73px;background:#cadcf9;"></div>
<div style="left:546.00px;top:189.98px;width:143.30px;height:11.73px;background:#f3f8fe;"></div>
<div style="left:689.30px;top:189.98px;width:45.00px;height:11.73px;background:#cadcf9;"></div>
<div style="left:734.30px;top:189.98px;width:45.10px;height:11.73px;background:#f3f8fe;"></div>
<div style="left:779.40px;top:189.98px;width:37.80px;height:11.73px;background:#f3f8fe;"></div>
<div class="t" style="left:286.20px;top:192.00px;font:normal 7.9px/10px 'Liberation Sans',sans-serif;color:#333;letter-spacing:0.000px;-webkit-text-stroke:0.18px #333;transform:scaleX(0.8810);transform-origin:0 50%;">OZ-2023-104-000003</div>
<div class="t" style="left:394.00px;top:192.00px;font:normal 7.9px/10px 'Liberation Sans',sans-serif;color:#333;letter-spacing:0.000px;-webkit-text-stroke:0.18px #333;transform:scaleX(0.8810);transform-origin:0 50%;">01.03.2023</div>
<div class="t" style="left:461.60px;top:192.00px;font:normal 7.9px/10px 'Liberation Sans',sans-serif;color:#333;letter-spacing:0.000px;-webkit-text-stroke:0.18px #333;transform:scaleX(0.8810);transform-origin:0 50%;">32165465</div>
<div class="t" style="left:548.00px;top:192.00px;font:normal 7.9px/10px 'Liberation Sans',sans-serif;color:#333;letter-spacing:0.000px;-webkit-text-stroke:0.18px #333;transform:scaleX(0.8810);transform-origin:0 50%;">Ost. záväzok</div>
<div class="t" style="left:701.64px;top:192.00px;font:normal 7.9px/10px 'Liberation Sans',sans-serif;color:#333;letter-spacing:0.000px;-webkit-text-stroke:0.18px #333;transform:scaleX(0.8810);transform-origin:0 50%;">85 200,00</div>
<div style="left:272.60px;top:201.66px;width:12.00px;height:11.73px;background:#fbfcfe;"></div>
<div style="left:284.60px;top:201.66px;width:107.80px;height:11.73px;background:#dde9fc;"></div>
<div style="left:392.40px;top:201.66px;width:67.20px;height:11.73px;background:#ffffff;"></div>
<div style="left:459.60px;top:201.66px;width:86.40px;height:11.73px;background:#dde9fc;"></div>
<div style="left:546.00px;top:201.66px;width:143.30px;height:11.73px;background:#ffffff;"></div>
<div style="left:689.30px;top:201.66px;width:45.00px;height:11.73px;background:#dde9fc;"></div>
<div style="left:734.30px;top:201.66px;width:45.10px;height:11.73px;background:#ffffff;"></div>
<div style="left:779.40px;top:201.66px;width:37.80px;height:11.73px;background:#ffffff;"></div>
<div class="t" style="left:286.20px;top:203.00px;font:normal 7.9px/10px 'Liberation Sans',sans-serif;color:#333;letter-spacing:0.000px;-webkit-text-stroke:0.18px #333;transform:scaleX(0.8810);transform-origin:0 50%;">OZ-2023-104-000003</div>
<div class="t" style="left:394.00px;top:203.00px;font:normal 7.9px/10px 'Liberation Sans',sans-serif;color:#333;letter-spacing:0.000px;-webkit-text-stroke:0.18px #333;transform:scaleX(0.8810);transform-origin:0 50%;">01.03.2023</div>
<div class="t" style="left:461.60px;top:203.00px;font:normal 7.9px/10px 'Liberation Sans',sans-serif;color:#333;letter-spacing:0.000px;-webkit-text-stroke:0.18px #333;transform:scaleX(0.8810);transform-origin:0 50%;">32165465</div>
<div class="t" style="left:548.00px;top:203.00px;font:normal 7.9px/10px 'Liberation Sans',sans-serif;color:#333;letter-spacing:0.000px;-webkit-text-stroke:0.18px #333;transform:scaleX(0.8810);transform-origin:0 50%;">DPH</div>
<div class="t" style="left:701.64px;top:203.00px;font:normal 7.9px/10px 'Liberation Sans',sans-serif;color:#333;letter-spacing:0.000px;-webkit-text-stroke:0.18px #333;transform:scaleX(0.8810);transform-origin:0 50%;">17 040,00</div>
<div style="left:272.60px;top:213.34px;width:12.00px;height:11.73px;background:#fbfcfe;"></div>
<div style="left:284.60px;top:213.34px;width:107.80px;height:11.73px;background:#cadcf9;"></div>
<div style="left:392.40px;top:213.34px;width:67.20px;height:11.73px;background:#f3f8fe;"></div>
<div style="left:459.60px;top:213.34px;width:86.40px;height:11.73px;background:#cadcf9;"></div>
<div style="left:546.00px;top:213.34px;width:143.30px;height:11.73px;background:#f3f8fe;"></div>
<div style="left:689.30px;top:213.34px;width:45.00px;height:11.73px;background:#cadcf9;"></div>
<div style="left:734.30px;top:213.34px;width:45.10px;height:11.73px;background:#f3f8fe;"></div>
<div style="left:779.40px;top:213.34px;width:37.80px;height:11.73px;background:#f3f8fe;"></div>
<div class="t" style="left:286.20px;top:215.00px;font:normal 7.9px/10px 'Liberation Sans',sans-serif;color:#333;letter-spacing:0.000px;-webkit-text-stroke:0.18px #333;transform:scaleX(0.8810);transform-origin:0 50%;">OZ-2023-104-000004</div>
<div class="t" style="left:394.00px;top:215.00px;font:normal 7.9px/10px 'Liberation Sans',sans-serif;color:#333;letter-spacing:0.000px;-webkit-text-stroke:0.18px #333;transform:scaleX(0.8810);transform-origin:0 50%;">24.03.2023</div>
<div class="t" style="left:461.60px;top:215.00px;font:normal 7.9px/10px 'Liberation Sans',sans-serif;color:#333;letter-spacing:0.000px;-webkit-text-stroke:0.18px #333;transform:scaleX(0.8810);transform-origin:0 50%;">8887956</div>
<div class="t" style="left:548.00px;top:215.00px;font:normal 7.9px/10px 'Liberation Sans',sans-serif;color:#333;letter-spacing:0.000px;-webkit-text-stroke:0.18px #333;transform:scaleX(0.8810);transform-origin:0 50%;">Ost. záväzok</div>
<div class="t" style="left:697.77px;top:215.00px;font:normal 7.9px/10px 'Liberation Sans',sans-serif;color:#333;letter-spacing:0.000px;-webkit-text-stroke:0.18px #333;transform:scaleX(0.8810);transform-origin:0 50%;">146 320,00</div>
<div style="left:272.60px;top:225.02px;width:12.00px;height:11.73px;background:#fbfcfe;"></div>
<div style="left:284.60px;top:225.02px;width:107.80px;height:11.73px;background:#dde9fc;"></div>
<div style="left:392.40px;top:225.02px;width:67.20px;height:11.73px;background:#ffffff;"></div>
<div style="left:459.60px;top:225.02px;width:86.40px;height:11.73px;background:#dde9fc;"></div>
<div style="left:546.00px;top:225.02px;width:143.30px;height:11.73px;background:#ffffff;"></div>
<div style="left:689.30px;top:225.02px;width:45.00px;height:11.73px;background:#dde9fc;"></div>
<div style="left:734.30px;top:225.02px;width:45.10px;height:11.73px;background:#ffffff;"></div>
<div style="left:779.40px;top:225.02px;width:37.80px;height:11.73px;background:#ffffff;"></div>
<div class="t" style="left:286.20px;top:227.00px;font:normal 7.9px/10px 'Liberation Sans',sans-serif;color:#333;letter-spacing:0.000px;-webkit-text-stroke:0.18px #333;transform:scaleX(0.8810);transform-origin:0 50%;">OZ-2023-104-000004</div>
<div class="t" style="left:394.00px;top:227.00px;font:normal 7.9px/10px 'Liberation Sans',sans-serif;color:#333;letter-spacing:0.000px;-webkit-text-stroke:0.18px #333;transform:scaleX(0.8810);transform-origin:0 50%;">24.03.2023</div>
<div class="t" style="left:461.60px;top:227.00px;font:normal 7.9px/10px 'Liberation Sans',sans-serif;color:#333;letter-spacing:0.000px;-webkit-text-stroke:0.18px #333;transform:scaleX(0.8810);transform-origin:0 50%;">8887956</div>
<div class="t" style="left:548.00px;top:227.00px;font:normal 7.9px/10px 'Liberation Sans',sans-serif;color:#333;letter-spacing:0.000px;-webkit-text-stroke:0.18px #333;transform:scaleX(0.8810);transform-origin:0 50%;">DPH</div>
<div class="t" style="left:701.64px;top:227.00px;font:normal 7.9px/10px 'Liberation Sans',sans-serif;color:#333;letter-spacing:0.000px;-webkit-text-stroke:0.18px #333;transform:scaleX(0.8810);transform-origin:0 50%;">29 264,00</div>
<div style="left:272.60px;top:236.70px;width:12.00px;height:11.73px;background:#fbfcfe;"></div>
<div style="left:284.60px;top:236.70px;width:107.80px;height:11.73px;background:#034a71;"></div>
<div style="left:392.40px;top:236.70px;width:67.20px;height:11.73px;background:#034a71;"></div>
<div style="left:459.60px;top:236.70px;width:86.40px;height:11.73px;background:#034a71;"></div>
<div style="left:546.00px;top:236.70px;width:143.30px;height:11.73px;background:#034a71;"></div>
<div style="left:689.30px;top:236.70px;width:45.00px;height:11.73px;background:#034a71;"></div>
<div style="left:734.30px;top:236.70px;width:45.10px;height:11.73px;background:#034a71;"></div>
<div style="left:779.40px;top:236.70px;width:37.80px;height:11.73px;background:#034a71;"></div>
<div class="t" style="left:286.20px;top:238.00px;font:normal 7.9px/10px 'Liberation Sans',sans-serif;color:#f2f6fa;letter-spacing:0.000px;-webkit-text-stroke:0.18px #f2f6fa;transform:scaleX(0.8810);transform-origin:0 50%;">FV-2022-100-000041</div>
<div class="t" style="left:394.00px;top:238.00px;font:normal 7.9px/10px 'Liberation Sans',sans-serif;color:#f2f6fa;letter-spacing:0.000px;-webkit-text-stroke:0.18px #f2f6fa;transform:scaleX(0.8810);transform-origin:0 50%;">21.04.2022</div>
<div class="t" style="left:461.60px;top:238.00px;font:normal 7.9px/10px 'Liberation Sans',sans-serif;color:#f2f6fa;letter-spacing:0.000px;-webkit-text-stroke:0.18px #f2f6fa;transform:scaleX(0.8810);transform-origin:0 50%;">2100000041</div>
<div class="t" style="left:548.00px;top:238.00px;font:normal 7.9px/10px 'Liberation Sans',sans-serif;color:#f2f6fa;letter-spacing:0.000px;-webkit-text-stroke:0.18px #f2f6fa;transform:scaleX(0.8810);transform-origin:0 50%;">Predaj tovaru</div>
<div class="t" style="left:705.51px;top:238.00px;font:normal 7.9px/10px 'Liberation Sans',sans-serif;color:#f2f6fa;letter-spacing:0.000px;-webkit-text-stroke:0.18px #f2f6fa;transform:scaleX(0.8810);transform-origin:0 50%;">4 200,00</div>
<div class="t" style="left:735.80px;top:238.00px;font:normal 7.9px/10px 'Liberation Sans',sans-serif;color:#f2f6fa;letter-spacing:0.000px;-webkit-text-stroke:0.18px #f2f6fa;transform:scaleX(0.8810);transform-origin:0 50%;">311</div>
<div class="t" style="left:781.20px;top:238.00px;font:normal 7.9px/10px 'Liberation Sans',sans-serif;color:#f2f6fa;letter-spacing:0.000px;-webkit-text-stroke:0.18px #f2f6fa;transform:scaleX(0.8810);transform-origin:0 50%;">604</div>
<div style="left:272.60px;top:248.38px;width:12.00px;height:11.73px;background:#fbfcfe;"></div>
<div style="left:284.60px;top:248.38px;width:107.80px;height:11.73px;background:#dde9fc;"></div>
<div style="left:392.40px;top:248.38px;width:67.20px;height:11.73px;background:#ffffff;"></div>
<div style="left:459.60px;top:248.38px;width:86.40px;height:11.73px;background:#dde9fc;"></div>
<div style="left:546.00px;top:248.38px;width:143.30px;height:11.73px;background:#ffffff;"></div>
<div style="left:689.30px;top:248.38px;width:45.00px;height:11.73px;background:#dde9fc;"></div>
<div style="left:734.30px;top:248.38px;width:45.10px;height:11.73px;background:#ffffff;"></div>
<div style="left:779.40px;top:248.38px;width:37.80px;height:11.73px;background:#ffffff;"></div>
<div class="t" style="left:286.20px;top:250.00px;font:normal 7.9px/10px 'Liberation Sans',sans-serif;color:#333;letter-spacing:0.000px;-webkit-text-stroke:0.18px #333;transform:scaleX(0.8810);transform-origin:0 50%;">FV-2022-100-000041</div>
<div class="t" style="left:394.00px;top:250.00px;font:normal 7.9px/10px 'Liberation Sans',sans-serif;color:#333;letter-spacing:0.000px;-webkit-text-stroke:0.18px #333;transform:scaleX(0.8810);transform-origin:0 50%;">21.04.2022</div>
<div class="t" style="left:461.60px;top:250.00px;font:normal 7.9px/10px 'Liberation Sans',sans-serif;color:#333;letter-spacing:0.000px;-webkit-text-stroke:0.18px #333;transform:scaleX(0.8810);transform-origin:0 50%;">2100000041</div>
<div class="t" style="left:548.00px;top:250.00px;font:normal 7.9px/10px 'Liberation Sans',sans-serif;color:#333;letter-spacing:0.000px;-webkit-text-stroke:0.18px #333;transform:scaleX(0.8810);transform-origin:0 50%;">DPH</div>
<div class="t" style="left:711.31px;top:250.00px;font:normal 7.9px/10px 'Liberation Sans',sans-serif;color:#333;letter-spacing:0.000px;-webkit-text-stroke:0.18px #333;transform:scaleX(0.8810);transform-origin:0 50%;">840,00</div>
<div class="t" style="left:735.80px;top:250.00px;font:normal 7.9px/10px 'Liberation Sans',sans-serif;color:#333;letter-spacing:0.000px;-webkit-text-stroke:0.18px #333;transform:scaleX(0.8810);transform-origin:0 50%;">311</div>
<div class="t" style="left:781.20px;top:250.00px;font:normal 7.9px/10px 'Liberation Sans',sans-serif;color:#333;letter-spacing:0.000px;-webkit-text-stroke:0.18px #333;transform:scaleX(0.8810);transform-origin:0 50%;">343100</div>
<div style="left:272.60px;top:260.06px;width:12.00px;height:11.73px;background:#fbfcfe;"></div>
<div style="left:284.60px;top:260.06px;width:107.80px;height:11.73px;background:#cadcf9;"></div>
<div style="left:392.40px;top:260.06px;width:67.20px;height:11.73px;background:#f3f8fe;"></div>
<div style="left:459.60px;top:260.06px;width:86.40px;height:11.73px;background:#cadcf9;"></div>
<div style="left:546.00px;top:260.06px;width:143.30px;height:11.73px;background:#f3f8fe;"></div>
<div style="left:689.30px;top:260.06px;width:45.00px;height:11.73px;background:#cadcf9;"></div>
<div style="left:734.30px;top:260.06px;width:45.10px;height:11.73px;background:#f3f8fe;"></div>
<div style="left:779.40px;top:260.06px;width:37.80px;height:11.73px;background:#f3f8fe;"></div>
<div class="t" style="left:286.20px;top:262.00px;font:normal 7.9px/10px 'Liberation Sans',sans-serif;color:#333;letter-spacing:0.000px;-webkit-text-stroke:0.18px #333;transform:scaleX(0.8810);transform-origin:0 50%;">FV-2022-100-000042</div>
<div class="t" style="left:394.00px;top:262.00px;font:normal 7.9px/10px 'Liberation Sans',sans-serif;color:#333;letter-spacing:0.000px;-webkit-text-stroke:0.18px #333;transform:scaleX(0.8810);transform-origin:0 50%;">01.06.2022</div>
<div class="t" style="left:461.60px;top:262.00px;font:normal 7.9px/10px 'Liberation Sans',sans-serif;color:#333;letter-spacing:0.000px;-webkit-text-stroke:0.18px #333;transform:scaleX(0.8810);transform-origin:0 50%;">2100000042</div>
<div class="t" style="left:548.00px;top:262.00px;font:normal 7.9px/10px 'Liberation Sans',sans-serif;color:#333;letter-spacing:0.000px;-webkit-text-stroke:0.18px #333;transform:scaleX(0.8810);transform-origin:0 50%;">Predaj tovaru</div>
<div class="t" style="left:705.51px;top:262.00px;font:normal 7.9px/10px 'Liberation Sans',sans-serif;color:#333;letter-spacing:0.000px;-webkit-text-stroke:0.18px #333;transform:scaleX(0.8810);transform-origin:0 50%;">5 300,00</div>
<div class="t" style="left:735.80px;top:262.00px;font:normal 7.9px/10px 'Liberation Sans',sans-serif;color:#333;letter-spacing:0.000px;-webkit-text-stroke:0.18px #333;transform:scaleX(0.8810);transform-origin:0 50%;">311</div>
<div class="t" style="left:781.20px;top:262.00px;font:normal 7.9px/10px 'Liberation Sans',sans-serif;color:#333;letter-spacing:0.000px;-webkit-text-stroke:0.18px #333;transform:scaleX(0.8810);transform-origin:0 50%;">604</div>
<div style="left:272.60px;top:271.74px;width:12.00px;height:11.73px;background:#fbfcfe;"></div>
<div style="left:284.60px;top:271.74px;width:107.80px;height:11.73px;background:#dde9fc;"></div>
<div style="left:392.40px;top:271.74px;width:67.20px;height:11.73px;background:#ffffff;"></div>
<div style="left:459.60px;top:271.74px;width:86.40px;height:11.73px;background:#dde9fc;"></div>
<div style="left:546.00px;top:271.74px;width:143.30px;height:11.73px;background:#ffffff;"></div>
<div style="left:689.30px;top:271.74px;width:45.00px;height:11.73px;background:#dde9fc;"></div>
<div style="left:734.30px;top:271.74px;width:45.10px;height:11.73px;background:#ffffff;"></div>
<div style="left:779.40px;top:271.74px;width:37.80px;height:11.73px;background:#ffffff;"></div>
<div class="t" style="left:286.20px;top:273.00px;font:normal 7.9px/10px 'Liberation Sans',sans-serif;color:#333;letter-spacing:0.000px;-webkit-text-stroke:0.18px #333;transform:scaleX(0.8810);transform-origin:0 50%;">FV-2022-100-000042</div>
<div class="t" style="left:394.00px;top:273.00px;font:normal 7.9px/10px 'Liberation Sans',sans-serif;color:#333;letter-spacing:0.000px;-webkit-text-stroke:0.18px #333;transform:scaleX(0.8810);transform-origin:0 50%;">01.06.2022</div>
<div class="t" style="left:461.60px;top:273.00px;font:normal 7.9px/10px 'Liberation Sans',sans-serif;color:#333;letter-spacing:0.000px;-webkit-text-stroke:0.18px #333;transform:scaleX(0.8810);transform-origin:0 50%;">2100000042</div>
<div class="t" style="left:548.00px;top:273.00px;font:normal 7.9px/10px 'Liberation Sans',sans-serif;color:#333;letter-spacing:0.000px;-webkit-text-stroke:0.18px #333;transform:scaleX(0.8810);transform-origin:0 50%;">DPH</div>
<div class="t" style="left:705.51px;top:273.00px;font:normal 7.9px/10px 'Liberation Sans',sans-serif;color:#333;letter-spacing:0.000px;-webkit-text-stroke:0.18px #333;transform:scaleX(0.8810);transform-origin:0 50%;">1 060,00</div>
<div class="t" style="left:735.80px;top:273.00px;font:normal 7.9px/10px 'Liberation Sans',sans-serif;color:#333;letter-spacing:0.000px;-webkit-text-stroke:0.18px #333;transform:scaleX(0.8810);transform-origin:0 50%;">311</div>
<div class="t" style="left:781.20px;top:273.00px;font:normal 7.9px/10px 'Liberation Sans',sans-serif;color:#333;letter-spacing:0.000px;-webkit-text-stroke:0.18px #333;transform:scaleX(0.8810);transform-origin:0 50%;">343100</div>
<div style="left:272.60px;top:283.42px;width:12.00px;height:11.73px;background:#fbfcfe;"></div>
<div style="left:284.60px;top:283.42px;width:107.80px;height:11.73px;background:#cadcf9;"></div>
<div style="left:392.40px;top:283.42px;width:67.20px;height:11.73px;background:#f3f8fe;"></div>
<div style="left:459.60px;top:283.42px;width:86.40px;height:11.73px;background:#cadcf9;"></div>
<div style="left:546.00px;top:283.42px;width:143.30px;height:11.73px;background:#f3f8fe;"></div>
<div style="left:689.30px;top:283.42px;width:45.00px;height:11.73px;background:#cadcf9;"></div>
<div style="left:734.30px;top:283.42px;width:45.10px;height:11.73px;background:#f3f8fe;"></div>
<div style="left:779.40px;top:283.42px;width:37.80px;height:11.73px;background:#f3f8fe;"></div>
<div class="t" style="left:286.20px;top:285.00px;font:normal 7.9px/10px 'Liberation Sans',sans-serif;color:#333;letter-spacing:0.000px;-webkit-text-stroke:0.18px #333;transform:scaleX(0.8810);transform-origin:0 50%;">FV-2022-100-000043</div>
<div class="t" style="left:394.00px;top:285.00px;font:normal 7.9px/10px 'Liberation Sans',sans-serif;color:#333;letter-spacing:0.000px;-webkit-text-stroke:0.18px #333;transform:scaleX(0.8810);transform-origin:0 50%;">08.08.2022</div>
<div class="t" style="left:461.60px;top:285.00px;font:normal 7.9px/10px 'Liberation Sans',sans-serif;color:#333;letter-spacing:0.000px;-webkit-text-stroke:0.18px #333;transform:scaleX(0.8810);transform-origin:0 50%;">2100000043</div>
<div class="t" style="left:548.00px;top:285.00px;font:normal 7.9px/10px 'Liberation Sans',sans-serif;color:#333;letter-spacing:0.000px;-webkit-text-stroke:0.18px #333;transform:scaleX(0.8810);transform-origin:0 50%;">Predaj tovaru</div>
<div class="t" style="left:705.51px;top:285.00px;font:normal 7.9px/10px 'Liberation Sans',sans-serif;color:#333;letter-spacing:0.000px;-webkit-text-stroke:0.18px #333;transform:scaleX(0.8810);transform-origin:0 50%;">1 800,00</div>
<div class="t" style="left:735.80px;top:285.00px;font:normal 7.9px/10px 'Liberation Sans',sans-serif;color:#333;letter-spacing:0.000px;-webkit-text-stroke:0.18px #333;transform:scaleX(0.8810);transform-origin:0 50%;">311</div>
<div class="t" style="left:781.20px;top:285.00px;font:normal 7.9px/10px 'Liberation Sans',sans-serif;color:#333;letter-spacing:0.000px;-webkit-text-stroke:0.18px #333;transform:scaleX(0.8810);transform-origin:0 50%;">604</div>
<div style="left:272.60px;top:295.10px;width:12.00px;height:11.73px;background:#fbfcfe;"></div>
<div style="left:284.60px;top:295.10px;width:107.80px;height:11.73px;background:#dde9fc;"></div>
<div style="left:392.40px;top:295.10px;width:67.20px;height:11.73px;background:#ffffff;"></div>
<div style="left:459.60px;top:295.10px;width:86.40px;height:11.73px;background:#dde9fc;"></div>
<div style="left:546.00px;top:295.10px;width:143.30px;height:11.73px;background:#ffffff;"></div>
<div style="left:689.30px;top:295.10px;width:45.00px;height:11.73px;background:#dde9fc;"></div>
<div style="left:734.30px;top:295.10px;width:45.10px;height:11.73px;background:#ffffff;"></div>
<div style="left:779.40px;top:295.10px;width:37.80px;height:11.73px;background:#ffffff;"></div>
<div class="t" style="left:286.20px;top:297.00px;font:normal 7.9px/10px 'Liberation Sans',sans-serif;color:#333;letter-spacing:0.000px;-webkit-text-stroke:0.18px #333;transform:scaleX(0.8810);transform-origin:0 50%;">FV-2022-100-000043</div>
<div class="t" style="left:394.00px;top:297.00px;font:normal 7.9px/10px 'Liberation Sans',sans-serif;color:#333;letter-spacing:0.000px;-webkit-text-stroke:0.18px #333;transform:scaleX(0.8810);transform-origin:0 50%;">08.08.2022</div>
<div class="t" style="left:461.60px;top:297.00px;font:normal 7.9px/10px 'Liberation Sans',sans-serif;color:#333;letter-spacing:0.000px;-webkit-text-stroke:0.18px #333;transform:scaleX(0.8810);transform-origin:0 50%;">2100000043</div>
<div class="t" style="left:548.00px;top:297.00px;font:normal 7.9px/10px 'Liberation Sans',sans-serif;color:#333;letter-spacing:0.000px;-webkit-text-stroke:0.18px #333;transform:scaleX(0.8810);transform-origin:0 50%;">DPH</div>
<div class="t" style="left:711.31px;top:297.00px;font:normal 7.9px/10px 'Liberation Sans',sans-serif;color:#333;letter-spacing:0.000px;-webkit-text-stroke:0.18px #333;transform:scaleX(0.8810);transform-origin:0 50%;">360,00</div>
<div class="t" style="left:735.80px;top:297.00px;font:normal 7.9px/10px 'Liberation Sans',sans-serif;color:#333;letter-spacing:0.000px;-webkit-text-stroke:0.18px #333;transform:scaleX(0.8810);transform-origin:0 50%;">311</div>
<div class="t" style="left:781.20px;top:297.00px;font:normal 7.9px/10px 'Liberation Sans',sans-serif;color:#333;letter-spacing:0.000px;-webkit-text-stroke:0.18px #333;transform:scaleX(0.8810);transform-origin:0 50%;">343100</div>
<div style="left:272.60px;top:306.78px;width:12.00px;height:11.73px;background:#fbfcfe;"></div>
<div style="left:284.60px;top:306.78px;width:107.80px;height:11.73px;background:#cadcf9;"></div>
<div style="left:392.40px;top:306.78px;width:67.20px;height:11.73px;background:#f3f8fe;"></div>
<div style="left:459.60px;top:306.78px;width:86.40px;height:11.73px;background:#cadcf9;"></div>
<div style="left:546.00px;top:306.78px;width:143.30px;height:11.73px;background:#f3f8fe;"></div>
<div style="left:689.30px;top:306.78px;width:45.00px;height:11.73px;background:#cadcf9;"></div>
<div style="left:734.30px;top:306.78px;width:45.10px;height:11.73px;background:#f3f8fe;"></div>
<div style="left:779.40px;top:306.78px;width:37.80px;height:11.73px;background:#f3f8fe;"></div>
<div class="t" style="left:286.20px;top:309.00px;font:normal 7.9px/10px 'Liberation Sans',sans-serif;color:#333;letter-spacing:0.000px;-webkit-text-stroke:0.18px #333;transform:scaleX(0.8810);transform-origin:0 50%;">FV-2022-100-000044</div>
<div class="t" style="left:394.00px;top:309.00px;font:normal 7.9px/10px 'Liberation Sans',sans-serif;color:#333;letter-spacing:0.000px;-webkit-text-stroke:0.18px #333;transform:scaleX(0.8810);transform-origin:0 50%;">01.09.2022</div>
<div class="t" style="left:461.60px;top:309.00px;font:normal 7.9px/10px 'Liberation Sans',sans-serif;color:#333;letter-spacing:0.000px;-webkit-text-stroke:0.18px #333;transform:scaleX(0.8810);transform-origin:0 50%;">2100000044</div>
<div class="t" style="left:548.00px;top:309.00px;font:normal 7.9px/10px 'Liberation Sans',sans-serif;color:#333;letter-spacing:0.000px;-webkit-text-stroke:0.18px #333;transform:scaleX(0.8810);transform-origin:0 50%;">Predaj tovaru</div>
<div class="t" style="left:705.51px;top:309.00px;font:normal 7.9px/10px 'Liberation Sans',sans-serif;color:#333;letter-spacing:0.000px;-webkit-text-stroke:0.18px #333;transform:scaleX(0.8810);transform-origin:0 50%;">8 200,00</div>
<div class="t" style="left:735.80px;top:309.00px;font:normal 7.9px/10px 'Liberation Sans',sans-serif;color:#333;letter-spacing:0.000px;-webkit-text-stroke:0.18px #333;transform:scaleX(0.8810);transform-origin:0 50%;">311</div>
<div class="t" style="left:781.20px;top:309.00px;font:normal 7.9px/10px 'Liberation Sans',sans-serif;color:#333;letter-spacing:0.000px;-webkit-text-stroke:0.18px #333;transform:scaleX(0.8810);transform-origin:0 50%;">604</div>
<div style="left:272.60px;top:318.46px;width:12.00px;height:11.73px;background:#fbfcfe;"></div>
<div style="left:284.60px;top:318.46px;width:107.80px;height:11.73px;background:#dde9fc;"></div>
<div style="left:392.40px;top:318.46px;width:67.20px;height:11.73px;background:#ffffff;"></div>
<div style="left:459.60px;top:318.46px;width:86.40px;height:11.73px;background:#dde9fc;"></div>
<div style="left:546.00px;top:318.46px;width:143.30px;height:11.73px;background:#ffffff;"></div>
<div style="left:689.30px;top:318.46px;width:45.00px;height:11.73px;background:#dde9fc;"></div>
<div style="left:734.30px;top:318.46px;width:45.10px;height:11.73px;background:#ffffff;"></div>
<div style="left:779.40px;top:318.46px;width:37.80px;height:11.73px;background:#ffffff;"></div>
<div class="t" style="left:286.20px;top:320.00px;font:normal 7.9px/10px 'Liberation Sans',sans-serif;color:#333;letter-spacing:0.000px;-webkit-text-stroke:0.18px #333;transform:scaleX(0.8810);transform-origin:0 50%;">FV-2022-100-000044</div>
<div class="t" style="left:394.00px;top:320.00px;font:normal 7.9px/10px 'Liberation Sans',sans-serif;color:#333;letter-spacing:0.000px;-webkit-text-stroke:0.18px #333;transform:scaleX(0.8810);transform-origin:0 50%;">01.09.2022</div>
<div class="t" style="left:461.60px;top:320.00px;font:normal 7.9px/10px 'Liberation Sans',sans-serif;color:#333;letter-spacing:0.000px;-webkit-text-stroke:0.18px #333;transform:scaleX(0.8810);transform-origin:0 50%;">2100000044</div>
<div class="t" style="left:548.00px;top:320.00px;font:normal 7.9px/10px 'Liberation Sans',sans-serif;color:#333;letter-spacing:0.000px;-webkit-text-stroke:0.18px #333;transform:scaleX(0.8810);transform-origin:0 50%;">DPH</div>
<div class="t" style="left:705.51px;top:320.00px;font:normal 7.9px/10px 'Liberation Sans',sans-serif;color:#333;letter-spacing:0.000px;-webkit-text-stroke:0.18px #333;transform:scaleX(0.8810);transform-origin:0 50%;">1 640,00</div>
<div class="t" style="left:735.80px;top:320.00px;font:normal 7.9px/10px 'Liberation Sans',sans-serif;color:#333;letter-spacing:0.000px;-webkit-text-stroke:0.18px #333;transform:scaleX(0.8810);transform-origin:0 50%;">311</div>
<div class="t" style="left:781.20px;top:320.00px;font:normal 7.9px/10px 'Liberation Sans',sans-serif;color:#333;letter-spacing:0.000px;-webkit-text-stroke:0.18px #333;transform:scaleX(0.8810);transform-origin:0 50%;">343100</div>
<div style="left:272.60px;top:330.14px;width:12.00px;height:11.73px;background:#fbfcfe;"></div>
<div style="left:284.60px;top:330.14px;width:107.80px;height:11.73px;background:#cadcf9;"></div>
<div style="left:392.40px;top:330.14px;width:67.20px;height:11.73px;background:#f3f8fe;"></div>
<div style="left:459.60px;top:330.14px;width:86.40px;height:11.73px;background:#cadcf9;"></div>
<div style="left:546.00px;top:330.14px;width:143.30px;height:11.73px;background:#f3f8fe;"></div>
<div style="left:689.30px;top:330.14px;width:45.00px;height:11.73px;background:#cadcf9;"></div>
<div style="left:734.30px;top:330.14px;width:45.10px;height:11.73px;background:#f3f8fe;"></div>
<div style="left:779.40px;top:330.14px;width:37.80px;height:11.73px;background:#f3f8fe;"></div>
<div class="t" style="left:286.20px;top:332.00px;font:normal 7.9px/10px 'Liberation Sans',sans-serif;color:#333;letter-spacing:0.000px;-webkit-text-stroke:0.18px #333;transform:scaleX(0.8810);transform-origin:0 50%;">PP-2023-300-1-000002</div>
<div class="t" style="left:394.00px;top:332.00px;font:normal 7.9px/10px 'Liberation Sans',sans-serif;color:#333;letter-spacing:0.000px;-webkit-text-stroke:0.18px #333;transform:scaleX(0.8810);transform-origin:0 50%;">24.03.2022</div>
<div class="t" style="left:461.60px;top:332.00px;font:normal 7.9px/10px 'Liberation Sans',sans-serif;color:#333;letter-spacing:0.000px;-webkit-text-stroke:0.18px #333;transform:scaleX(0.8810);transform-origin:0 50%;">2100000040</div>
<div class="t" style="left:548.00px;top:332.00px;font:normal 7.9px/10px 'Liberation Sans',sans-serif;color:#333;letter-spacing:0.000px;-webkit-text-stroke:0.18px #333;transform:scaleX(0.8810);transform-origin:0 50%;">Úhrada dokladu  FV-2022-100-000040</div>
<div class="t" style="left:705.51px;top:332.00px;font:normal 7.9px/10px 'Liberation Sans',sans-serif;color:#333;letter-spacing:0.000px;-webkit-text-stroke:0.18px #333;transform:scaleX(0.8810);transform-origin:0 50%;">3 000,00</div>
<div class="t" style="left:735.80px;top:332.00px;font:normal 7.9px/10px 'Liberation Sans',sans-serif;color:#333;letter-spacing:0.000px;-webkit-text-stroke:0.18px #333;transform:scaleX(0.8810);transform-origin:0 50%;">211100</div>
<div class="t" style="left:781.20px;top:332.00px;font:normal 7.9px/10px 'Liberation Sans',sans-serif;color:#333;letter-spacing:0.000px;-webkit-text-stroke:0.18px #333;transform:scaleX(0.8810);transform-origin:0 50%;">311</div>
<div style="left:272.60px;top:341.82px;width:12.00px;height:11.73px;background:#fbfcfe;"></div>
<div style="left:284.60px;top:341.82px;width:107.80px;height:11.73px;background:#dde9fc;"></div>
<div style="left:392.40px;top:341.82px;width:67.20px;height:11.73px;background:#ffffff;"></div>
<div style="left:459.60px;top:341.82px;width:86.40px;height:11.73px;background:#dde9fc;"></div>
<div style="left:546.00px;top:341.82px;width:143.30px;height:11.73px;background:#ffffff;"></div>
<div style="left:689.30px;top:341.82px;width:45.00px;height:11.73px;background:#dde9fc;"></div>
<div style="left:734.30px;top:341.82px;width:45.10px;height:11.73px;background:#ffffff;"></div>
<div style="left:779.40px;top:341.82px;width:37.80px;height:11.73px;background:#ffffff;"></div>
<div class="t" style="left:286.20px;top:344.00px;font:normal 7.9px/10px 'Liberation Sans',sans-serif;color:#333;letter-spacing:0.000px;-webkit-text-stroke:0.18px #333;transform:scaleX(0.8810);transform-origin:0 50%;">PP-2023-300-1-000003</div>
<div class="t" style="left:394.00px;top:344.00px;font:normal 7.9px/10px 'Liberation Sans',sans-serif;color:#333;letter-spacing:0.000px;-webkit-text-stroke:0.18px #333;transform:scaleX(0.8810);transform-origin:0 50%;">21.04.2022</div>
<div class="t" style="left:461.60px;top:344.00px;font:normal 7.9px/10px 'Liberation Sans',sans-serif;color:#333;letter-spacing:0.000px;-webkit-text-stroke:0.18px #333;transform:scaleX(0.8810);transform-origin:0 50%;">2100000041</div>
<div class="t" style="left:548.00px;top:344.00px;font:normal 7.9px/10px 'Liberation Sans',sans-serif;color:#333;letter-spacing:0.000px;-webkit-text-stroke:0.18px #333;transform:scaleX(0.8810);transform-origin:0 50%;">Úhrada dokladu  FV-2022-100-000041</div>
<div class="t" style="left:705.51px;top:344.00px;font:normal 7.9px/10px 'Liberation Sans',sans-serif;color:#333;letter-spacing:0.000px;-webkit-text-stroke:0.18px #333;transform:scaleX(0.8810);transform-origin:0 50%;">5 040,00</div>
<div class="t" style="left:735.80px;top:344.00px;font:normal 7.9px/10px 'Liberation Sans',sans-serif;color:#333;letter-spacing:0.000px;-webkit-text-stroke:0.18px #333;transform:scaleX(0.8810);transform-origin:0 50%;">211100</div>
<div class="t" style="left:781.20px;top:344.00px;font:normal 7.9px/10px 'Liberation Sans',sans-serif;color:#333;letter-spacing:0.000px;-webkit-text-stroke:0.18px #333;transform:scaleX(0.8810);transform-origin:0 50%;">311</div>
<div style="left:272.60px;top:353.50px;width:12.00px;height:11.73px;background:#fbfcfe;"></div>
<div style="left:284.60px;top:353.50px;width:107.80px;height:11.73px;background:#cadcf9;"></div>
<div style="left:392.40px;top:353.50px;width:67.20px;height:11.73px;background:#f3f8fe;"></div>
<div style="left:459.60px;top:353.50px;width:86.40px;height:11.73px;background:#cadcf9;"></div>
<div style="left:546.00px;top:353.50px;width:143.30px;height:11.73px;background:#f3f8fe;"></div>
<div style="left:689.30px;top:353.50px;width:45.00px;height:11.73px;background:#cadcf9;"></div>
<div style="left:734.30px;top:353.50px;width:45.10px;height:11.73px;background:#f3f8fe;"></div>
<div style="left:779.40px;top:353.50px;width:37.80px;height:11.73px;background:#f3f8fe;"></div>
<div class="t" style="left:286.20px;top:355.00px;font:normal 7.9px/10px 'Liberation Sans',sans-serif;color:#333;letter-spacing:0.000px;-webkit-text-stroke:0.18px #333;transform:scaleX(0.8810);transform-origin:0 50%;">PP-2023-300-1-000004</div>
<div class="t" style="left:394.00px;top:355.00px;font:normal 7.9px/10px 'Liberation Sans',sans-serif;color:#333;letter-spacing:0.000px;-webkit-text-stroke:0.18px #333;transform:scaleX(0.8810);transform-origin:0 50%;">01.06.2022</div>
<div class="t" style="left:461.60px;top:355.00px;font:normal 7.9px/10px 'Liberation Sans',sans-serif;color:#333;letter-spacing:0.000px;-webkit-text-stroke:0.18px #333;transform:scaleX(0.8810);transform-origin:0 50%;">2100000042</div>
<div class="t" style="left:548.00px;top:355.00px;font:normal 7.9px/10px 'Liberation Sans',sans-serif;color:#333;letter-spacing:0.000px;-webkit-text-stroke:0.18px #333;transform:scaleX(0.8810);transform-origin:0 50%;">Úhrada dokladu  FV-2022-100-000042</div>
<div class="t" style="left:705.51px;top:355.00px;font:normal 7.9px/10px 'Liberation Sans',sans-serif;color:#333;letter-spacing:0.000px;-webkit-text-stroke:0.18px #333;transform:scaleX(0.8810);transform-origin:0 50%;">6 360,00</div>
<div class="t" style="left:735.80px;top:355.00px;font:normal 7.9px/10px 'Liberation Sans',sans-serif;color:#333;letter-spacing:0.000px;-webkit-text-stroke:0.18px #333;transform:scaleX(0.8810);transform-origin:0 50%;">211100</div>
<div class="t" style="left:781.20px;top:355.00px;font:normal 7.9px/10px 'Liberation Sans',sans-serif;color:#333;letter-spacing:0.000px;-webkit-text-stroke:0.18px #333;transform:scaleX(0.8810);transform-origin:0 50%;">311</div>
<div style="left:272.60px;top:365.18px;width:12.00px;height:11.73px;background:#fbfcfe;"></div>
<div style="left:284.60px;top:365.18px;width:107.80px;height:11.73px;background:#dde9fc;"></div>
<div style="left:392.40px;top:365.18px;width:67.20px;height:11.73px;background:#ffffff;"></div>
<div style="left:459.60px;top:365.18px;width:86.40px;height:11.73px;background:#dde9fc;"></div>
<div style="left:546.00px;top:365.18px;width:143.30px;height:11.73px;background:#ffffff;"></div>
<div style="left:689.30px;top:365.18px;width:45.00px;height:11.73px;background:#dde9fc;"></div>
<div style="left:734.30px;top:365.18px;width:45.10px;height:11.73px;background:#ffffff;"></div>
<div style="left:779.40px;top:365.18px;width:37.80px;height:11.73px;background:#ffffff;"></div>
<div class="t" style="left:286.20px;top:367.00px;font:normal 7.9px/10px 'Liberation Sans',sans-serif;color:#333;letter-spacing:0.000px;-webkit-text-stroke:0.18px #333;transform:scaleX(0.8810);transform-origin:0 50%;">PP-2023-300-1-000005</div>
<div class="t" style="left:394.00px;top:367.00px;font:normal 7.9px/10px 'Liberation Sans',sans-serif;color:#333;letter-spacing:0.000px;-webkit-text-stroke:0.18px #333;transform:scaleX(0.8810);transform-origin:0 50%;">08.08.2022</div>
<div class="t" style="left:461.60px;top:367.00px;font:normal 7.9px/10px 'Liberation Sans',sans-serif;color:#333;letter-spacing:0.000px;-webkit-text-stroke:0.18px #333;transform:scaleX(0.8810);transform-origin:0 50%;">2100000043</div>
<div class="t" style="left:548.00px;top:367.00px;font:normal 7.9px/10px 'Liberation Sans',sans-serif;color:#333;letter-spacing:0.000px;-webkit-text-stroke:0.18px #333;transform:scaleX(0.8810);transform-origin:0 50%;">Úhrada dokladu  FV-2022-100-000043</div>
<div class="t" style="left:705.51px;top:367.00px;font:normal 7.9px/10px 'Liberation Sans',sans-serif;color:#333;letter-spacing:0.000px;-webkit-text-stroke:0.18px #333;transform:scaleX(0.8810);transform-origin:0 50%;">2 160,00</div>
<div class="t" style="left:735.80px;top:367.00px;font:normal 7.9px/10px 'Liberation Sans',sans-serif;color:#333;letter-spacing:0.000px;-webkit-text-stroke:0.18px #333;transform:scaleX(0.8810);transform-origin:0 50%;">211100</div>
<div class="t" style="left:781.20px;top:367.00px;font:normal 7.9px/10px 'Liberation Sans',sans-serif;color:#333;letter-spacing:0.000px;-webkit-text-stroke:0.18px #333;transform:scaleX(0.8810);transform-origin:0 50%;">311</div>
<div style="left:272.60px;top:376.86px;width:12.00px;height:11.73px;background:#fbfcfe;"></div>
<div style="left:284.60px;top:376.86px;width:107.80px;height:11.73px;background:#cadcf9;"></div>
<div style="left:392.40px;top:376.86px;width:67.20px;height:11.73px;background:#f3f8fe;"></div>
<div style="left:459.60px;top:376.86px;width:86.40px;height:11.73px;background:#cadcf9;"></div>
<div style="left:546.00px;top:376.86px;width:143.30px;height:11.73px;background:#f3f8fe;"></div>
<div style="left:689.30px;top:376.86px;width:45.00px;height:11.73px;background:#cadcf9;"></div>
<div style="left:734.30px;top:376.86px;width:45.10px;height:11.73px;background:#f3f8fe;"></div>
<div style="left:779.40px;top:376.86px;width:37.80px;height:11.73px;background:#f3f8fe;"></div>
<div class="t" style="left:286.20px;top:379.00px;font:normal 7.9px/10px 'Liberation Sans',sans-serif;color:#333;letter-spacing:0.000px;-webkit-text-stroke:0.18px #333;transform:scaleX(0.8810);transform-origin:0 50%;">PP-2023-300-1-000006</div>
<div class="t" style="left:394.00px;top:379.00px;font:normal 7.9px/10px 'Liberation Sans',sans-serif;color:#333;letter-spacing:0.000px;-webkit-text-stroke:0.18px #333;transform:scaleX(0.8810);transform-origin:0 50%;">01.09.2022</div>
<div class="t" style="left:461.60px;top:379.00px;font:normal 7.9px/10px 'Liberation Sans',sans-serif;color:#333;letter-spacing:0.000px;-webkit-text-stroke:0.18px #333;transform:scaleX(0.8810);transform-origin:0 50%;">2100000044</div>
<div class="t" style="left:548.00px;top:379.00px;font:normal 7.9px/10px 'Liberation Sans',sans-serif;color:#333;letter-spacing:0.000px;-webkit-text-stroke:0.18px #333;transform:scaleX(0.8810);transform-origin:0 50%;">Úhrada dokladu  FV-2022-100-000044</div>
<div class="t" style="left:705.51px;top:379.00px;font:normal 7.9px/10px 'Liberation Sans',sans-serif;color:#333;letter-spacing:0.000px;-webkit-text-stroke:0.18px #333;transform:scaleX(0.8810);transform-origin:0 50%;">1 640,00</div>
<div class="t" style="left:735.80px;top:379.00px;font:normal 7.9px/10px 'Liberation Sans',sans-serif;color:#333;letter-spacing:0.000px;-webkit-text-stroke:0.18px #333;transform:scaleX(0.8810);transform-origin:0 50%;">211100</div>
<div class="t" style="left:781.20px;top:379.00px;font:normal 7.9px/10px 'Liberation Sans',sans-serif;color:#333;letter-spacing:0.000px;-webkit-text-stroke:0.18px #333;transform:scaleX(0.8810);transform-origin:0 50%;">311</div>
<div style="left:272.60px;top:388.54px;width:12.00px;height:11.73px;background:#fbfcfe;"></div>
<div style="left:284.60px;top:388.54px;width:107.80px;height:11.73px;background:#dde9fc;"></div>
<div style="left:392.40px;top:388.54px;width:67.20px;height:11.73px;background:#ffffff;"></div>
<div style="left:459.60px;top:388.54px;width:86.40px;height:11.73px;background:#dde9fc;"></div>
<div style="left:546.00px;top:388.54px;width:143.30px;height:11.73px;background:#ffffff;"></div>
<div style="left:689.30px;top:388.54px;width:45.00px;height:11.73px;background:#dde9fc;"></div>
<div style="left:734.30px;top:388.54px;width:45.10px;height:11.73px;background:#ffffff;"></div>
<div style="left:779.40px;top:388.54px;width:37.80px;height:11.73px;background:#ffffff;"></div>
<div class="t" style="left:286.20px;top:390.00px;font:normal 7.9px/10px 'Liberation Sans',sans-serif;color:#333;letter-spacing:0.000px;-webkit-text-stroke:0.18px #333;transform:scaleX(0.8810);transform-origin:0 50%;">FV-2023-100-000004</div>
<div class="t" style="left:394.00px;top:390.00px;font:normal 7.9px/10px 'Liberation Sans',sans-serif;color:#333;letter-spacing:0.000px;-webkit-text-stroke:0.18px #333;transform:scaleX(0.8810);transform-origin:0 50%;">15.01.2023</div>
<div style="left:272.60px;top:400.22px;width:12.00px;height:11.73px;background:#fbfcfe;"></div>
<div style="left:284.60px;top:400.22px;width:107.80px;height:11.73px;background:#cadcf9;"></div>
<div style="left:392.40px;top:400.22px;width:67.20px;height:11.73px;background:#f3f8fe;"></div>
<div style="left:459.60px;top:400.22px;width:86.40px;height:11.73px;background:#cadcf9;"></div>
<div style="left:546.00px;top:400.22px;width:143.30px;height:11.73px;background:#f3f8fe;"></div>
<div style="left:689.30px;top:400.22px;width:45.00px;height:11.73px;background:#cadcf9;"></div>
<div style="left:734.30px;top:400.22px;width:45.10px;height:11.73px;background:#f3f8fe;"></div>
<div style="left:779.40px;top:400.22px;width:37.80px;height:11.73px;background:#f3f8fe;"></div>
<div class="t" style="left:286.20px;top:402.00px;font:normal 7.9px/10px 'Liberation Sans',sans-serif;color:#333;letter-spacing:0.000px;-webkit-text-stroke:0.18px #333;transform:scaleX(0.8810);transform-origin:0 50%;">FV-2022-100-000045</div>
<div class="t" style="left:394.00px;top:402.00px;font:normal 7.9px/10px 'Liberation Sans',sans-serif;color:#333;letter-spacing:0.000px;-webkit-text-stroke:0.18px #333;transform:scaleX(0.8810);transform-origin:0 50%;">20.01.2022</div>
<div style="left:272.60px;top:411.90px;width:12.00px;height:11.73px;background:#fbfcfe;"></div>
<div style="left:284.60px;top:411.90px;width:107.80px;height:11.73px;background:#dde9fc;"></div>
<div style="left:392.40px;top:411.90px;width:67.20px;height:11.73px;background:#ffffff;"></div>
<div style="left:459.60px;top:411.90px;width:86.40px;height:11.73px;background:#dde9fc;"></div>
<div style="left:546.00px;top:411.90px;width:143.30px;height:11.73px;background:#ffffff;"></div>
<div style="left:689.30px;top:411.90px;width:45.00px;height:11.73px;background:#dde9fc;"></div>
<div style="left:734.30px;top:411.90px;width:45.10px;height:11.73px;background:#ffffff;"></div>
<div style="left:779.40px;top:411.90px;width:37.80px;height:11.73px;background:#ffffff;"></div>
<div class="t" style="left:286.20px;top:414.00px;font:normal 7.9px/10px 'Liberation Sans',sans-serif;color:#333;letter-spacing:0.000px;-webkit-text-stroke:0.18px #333;transform:scaleX(0.8810);transform-origin:0 50%;">FV-2022-100-000045</div>
<div class="t" style="left:394.00px;top:414.00px;font:normal 7.9px/10px 'Liberation Sans',sans-serif;color:#333;letter-spacing:0.000px;-webkit-text-stroke:0.18px #333;transform:scaleX(0.8810);transform-origin:0 50%;">20.01.2022</div>
<div style="left:272.60px;top:423.58px;width:12.00px;height:11.73px;background:#fbfcfe;"></div>
<div style="left:284.60px;top:423.58px;width:107.80px;height:11.73px;background:#cadcf9;"></div>
<div style="left:392.40px;top:423.58px;width:67.20px;height:11.73px;background:#f3f8fe;"></div>
<div style="left:459.60px;top:423.58px;width:86.40px;height:11.73px;background:#cadcf9;"></div>
<div style="left:546.00px;top:423.58px;width:143.30px;height:11.73px;background:#f3f8fe;"></div>
<div style="left:689.30px;top:423.58px;width:45.00px;height:11.73px;background:#cadcf9;"></div>
<div style="left:734.30px;top:423.58px;width:45.10px;height:11.73px;background:#f3f8fe;"></div>
<div style="left:779.40px;top:423.58px;width:37.80px;height:11.73px;background:#f3f8fe;"></div>
<div class="t" style="left:286.20px;top:425.00px;font:normal 7.9px/10px 'Liberation Sans',sans-serif;color:#333;letter-spacing:0.000px;-webkit-text-stroke:0.18px #333;transform:scaleX(0.8810);transform-origin:0 50%;">FV-2023-100-000005</div>
<div class="t" style="left:394.00px;top:425.00px;font:normal 7.9px/10px 'Liberation Sans',sans-serif;color:#333;letter-spacing:0.000px;-webkit-text-stroke:0.18px #333;transform:scaleX(0.8810);transform-origin:0 50%;">28.01.2023</div>
<div style="left:272.60px;top:435.26px;width:12.00px;height:11.73px;background:#fbfcfe;"></div>
<div style="left:284.60px;top:435.26px;width:107.80px;height:11.73px;background:#dde9fc;"></div>
<div style="left:392.40px;top:435.26px;width:67.20px;height:11.73px;background:#ffffff;"></div>
<div style="left:459.60px;top:435.26px;width:86.40px;height:11.73px;background:#dde9fc;"></div>
<div style="left:546.00px;top:435.26px;width:143.30px;height:11.73px;background:#ffffff;"></div>
<div style="left:689.30px;top:435.26px;width:45.00px;height:11.73px;background:#dde9fc;"></div>
<div style="left:734.30px;top:435.26px;width:45.10px;height:11.73px;background:#ffffff;"></div>
<div style="left:779.40px;top:435.26px;width:37.80px;height:11.73px;background:#ffffff;"></div>
<div class="t" style="left:286.20px;top:437.00px;font:normal 7.9px/10px 'Liberation Sans',sans-serif;color:#333;letter-spacing:0.000px;-webkit-text-stroke:0.18px #333;transform:scaleX(0.8810);transform-origin:0 50%;">FV-2023-100-000006</div>
<div class="t" style="left:394.00px;top:437.00px;font:normal 7.9px/10px 'Liberation Sans',sans-serif;color:#333;letter-spacing:0.000px;-webkit-text-stroke:0.18px #333;transform:scaleX(0.8810);transform-origin:0 50%;">28.03.2023</div>
<div style="left:272.60px;top:446.94px;width:12.00px;height:11.73px;background:#fbfcfe;"></div>
<div style="left:284.60px;top:446.94px;width:107.80px;height:11.73px;background:#cadcf9;"></div>
<div style="left:392.40px;top:446.94px;width:67.20px;height:11.73px;background:#f3f8fe;"></div>
<div style="left:459.60px;top:446.94px;width:86.40px;height:11.73px;background:#cadcf9;"></div>
<div style="left:546.00px;top:446.94px;width:143.30px;height:11.73px;background:#f3f8fe;"></div>
<div style="left:689.30px;top:446.94px;width:45.00px;height:11.73px;background:#cadcf9;"></div>
<div style="left:734.30px;top:446.94px;width:45.10px;height:11.73px;background:#f3f8fe;"></div>
<div style="left:779.40px;top:446.94px;width:37.80px;height:11.73px;background:#f3f8fe;"></div>
<div class="t" style="left:286.20px;top:449.00px;font:normal 7.9px/10px 'Liberation Sans',sans-serif;color:#333;letter-spacing:0.000px;-webkit-text-stroke:0.18px #333;transform:scaleX(0.8810);transform-origin:0 50%;">FV-2023-100-000006</div>
<div class="t" style="left:394.00px;top:449.00px;font:normal 7.9px/10px 'Liberation Sans',sans-serif;color:#333;letter-spacing:0.000px;-webkit-text-stroke:0.18px #333;transform:scaleX(0.8810);transform-origin:0 50%;">28.03.2023</div>
<div style="left:284.30px;top:96.40px;width:0.70px;height:23.50px;background:#e6edf6;"></div>
<div style="left:392.10px;top:96.40px;width:0.70px;height:23.50px;background:#e6edf6;"></div>
<div style="left:459.30px;top:96.40px;width:0.70px;height:23.50px;background:#e6edf6;"></div>
<div style="left:545.70px;top:96.40px;width:0.70px;height:23.50px;background:#e6edf6;"></div>
<div style="left:689.00px;top:96.40px;width:0.70px;height:23.50px;background:#e6edf6;"></div>
<div style="left:734.00px;top:96.40px;width:0.70px;height:23.50px;background:#e6edf6;"></div>
<div style="left:779.10px;top:96.40px;width:0.70px;height:23.50px;background:#e6edf6;"></div>
<div style="left:392.10px;top:119.90px;width:0.70px;height:338.72px;background:rgba(200,215,235,0.35);"></div>
<div style="left:459.30px;top:119.90px;width:0.70px;height:338.72px;background:rgba(200,215,235,0.35);"></div>
<div style="left:545.70px;top:119.90px;width:0.70px;height:338.72px;background:rgba(200,215,235,0.35);"></div>
<div style="left:689.00px;top:119.90px;width:0.70px;height:338.72px;background:rgba(200,215,235,0.35);"></div>
<div style="left:734.00px;top:119.90px;width:0.70px;height:338.72px;background:rgba(200,215,235,0.35);"></div>
<div style="left:779.10px;top:119.90px;width:0.70px;height:338.72px;background:rgba(200,215,235,0.35);"></div>
<div class="t" style="left:286.60px;top:99.00px;font:normal 7.9px/10px 'Liberation Sans',sans-serif;color:#3a3f48;letter-spacing:0.000px;-webkit-text-stroke:0.18px #3a3f48;transform:scaleX(0.8810);transform-origin:0 50%;">Evidenčné číslo dokladu</div>
<div class="t" style="left:394.40px;top:99.00px;font:normal 7.9px/10px 'Liberation Sans',sans-serif;color:#3a3f48;letter-spacing:0.000px;-webkit-text-stroke:0.18px #3a3f48;transform:scaleX(0.8810);transform-origin:0 50%;">Dátum zaúčtovania</div>
<div class="t" style="left:461.60px;top:99.00px;font:normal 7.9px/10px 'Liberation Sans',sans-serif;color:#3a3f48;letter-spacing:0.000px;-webkit-text-stroke:0.18px #3a3f48;transform:scaleX(0.8810);transform-origin:0 50%;">Variabilný symbol</div>
<div class="t" style="left:548.20px;top:99.00px;font:normal 7.9px/10px 'Liberation Sans',sans-serif;color:#3a3f48;letter-spacing:0.000px;-webkit-text-stroke:0.18px #3a3f48;transform:scaleX(0.8810);transform-origin:0 50%;">Popis</div>
<div class="t" style="left:691.70px;top:99.00px;font:normal 7.9px/10px 'Liberation Sans',sans-serif;color:#3a3f48;letter-spacing:0.000px;-webkit-text-stroke:0.18px #3a3f48;transform:scaleX(0.8810);transform-origin:0 50%;">Čiastka</div>
<div class="t" style="left:735.80px;top:99.00px;font:normal 7.9px/10px 'Liberation Sans',sans-serif;color:#3a3f48;letter-spacing:0.000px;-webkit-text-stroke:0.18px #3a3f48;transform:scaleX(0.8810);transform-origin:0 50%;">MD</div>
<div class="t" style="left:781.40px;top:99.00px;font:normal 7.9px/10px 'Liberation Sans',sans-serif;color:#3a3f48;letter-spacing:0.000px;-webkit-text-stroke:0.18px #3a3f48;transform:scaleX(0.8810);transform-origin:0 50%;">DAL</div>
<div style="left:817.20px;top:96.40px;width:11.60px;height:362.90px;background:#eef3f8;"></div>
<div style="left:817.20px;top:96.40px;width:11.60px;height:11.70px;background:#ffffff;"></div>
<div style="left:817.20px;top:182.00px;width:11.60px;height:163.00px;background:#d4e2ef;"></div>
<div style="left:272.60px;top:459.60px;width:556.20px;height:11.70px;background:#eef3f8;"></div>
<div style="left:272.60px;top:459.60px;width:12.00px;height:11.70px;background:#ffffff;"></div>
<div style="left:285.40px;top:459.60px;width:11.00px;height:11.70px;background:#d4e2ef;"></div>
<div style="left:272.6px;top:96.4px;width:556.1999999999999px;height:374.9px;border:0.8px solid #e0e8f3;box-sizing:border-box"></div>
<div style="left:265px;top:489.3px;width:8.6px;height:8.7px;background:#fff;border:0.9px solid #b9c6d6;box-sizing:border-box"></div>
<div class="t" style="left:276.40px;top:489.00px;font:normal 7.9px/10px 'Liberation Sans',sans-serif;color:#333;letter-spacing:0.000px;-webkit-text-stroke:0.18px #333;transform:scaleX(0.8810);transform-origin:0 50%;">Len položky rozpísaných dokladov</div>
<div style="left:847.50px;top:75.80px;width:88.40px;height:12.90px;background:#dde9fc;"></div>
<div class="t" style="left:884.20px;top:78.00px;font:bold 8.2px/10px 'Liberation Sans',sans-serif;color:#1e2a36;letter-spacing:0.000px;transform:scaleX(0.9298);transform-origin:0 50%;">Všetko</div>
<div style="left:847.20px;top:95.00px;width:88.80px;height:15.50px;background:#5087b9;"></div>
<div class="t" style="left:872.64px;top:98.00px;font:normal 7.8px/10px 'Liberation Sans',sans-serif;color:#f4f8fc;letter-spacing:0.000px;transform:scaleX(0.8923);transform-origin:0 50%;">Zaúčtovanie</div>
<div style="left:847.20px;top:114.30px;width:88.80px;height:15.50px;background:#5087b9;"></div>
<div class="t" style="left:858.13px;top:118.00px;font:normal 7.8px/10px 'Liberation Sans',sans-serif;color:#f4f8fc;letter-spacing:0.000px;transform:scaleX(0.8923);transform-origin:0 50%;">Predkontácia dokladu</div>
<div style="left:847.20px;top:133.70px;width:88.80px;height:15.50px;background:#5087b9;"></div>
<div class="t" style="left:866.07px;top:137.00px;font:normal 7.8px/10px 'Liberation Sans',sans-serif;color:#f4f8fc;letter-spacing:0.000px;transform:scaleX(0.8923);transform-origin:0 50%;">Účtovné položky</div>
<div style="left:847.20px;top:153.10px;width:88.80px;height:15.50px;background:#5087b9;"></div>
<div class="t" style="left:861.04px;top:156.00px;font:normal 7.8px/10px 'Liberation Sans',sans-serif;color:#f4f8fc;letter-spacing:0.000px;transform:scaleX(0.8923);transform-origin:0 50%;">Zobrazenie dokladu</div>
<div style="left:847.20px;top:181.00px;width:88.80px;height:15.50px;background:#5087b9;"></div>
<div class="t" style="left:866.65px;top:184.00px;font:normal 7.8px/10px 'Liberation Sans',sans-serif;color:#7ea6cc;letter-spacing:0.000px;transform:scaleX(0.8923);transform-origin:0 50%;">Doplnenie účtov</div>
<div class="t" style="left:847.40px;top:454.00px;font:normal 7.9px/10px 'Liberation Sans',sans-serif;color:#333;letter-spacing:0.000px;-webkit-text-stroke:0.18px #333;transform:scaleX(0.8810);transform-origin:0 50%;">Aktuálne účtovné obdobie</div>
<div style="left:847.2px;top:466.2px;width:88.5px;height:11.8px;background:#fff;border:0.8px solid #e3eaf4;box-sizing:border-box"></div>
<div class="t" style="left:849.60px;top:468.00px;font:normal 7.9px/10px 'Liberation Sans',sans-serif;color:#222;letter-spacing:0.000px;-webkit-text-stroke:0.18px #222;transform:scaleX(0.8810);transform-origin:0 50%;">2023</div>
<div style="left:847.20px;top:484.70px;width:88.80px;height:15.40px;background:#5087b9;"></div>
<div class="t" style="left:865.48px;top:488.00px;font:normal 7.8px/10px 'Liberation Sans',sans-serif;color:#f4f8fc;letter-spacing:0.000px;transform:scaleX(0.8923);transform-origin:0 50%;">Účtovné obdobie</div>
<svg style="position:absolute;left:0;top:0" width="1168" height="730"><polygon points="261,56.5 270.7,60.3 263,65.8" fill="#fafafa"/><line x1="264" y1="63.5" x2="268.5" y2="60.8" stroke="#8a8a8a" stroke-width=".9"/><line x1="894.8" y1="60.8" x2="902.0" y2="60.8" stroke="#484848" stroke-width="1.1"/><rect x="912" y="57.1" width="7" height="7" fill="none" stroke="#484848" stroke-width="1.1"/><path d="M928.8,56.5 L937.0,64.7 M937.0,56.5 L928.8,64.7" stroke="#484848" stroke-width="1"/><circle cx="278.6" cy="125.74000000000001" r="4.6" fill="#f5b400"/><rect x="278.05" y="122.74000000000001" width="1.1" height="3.6" fill="#fff"/><rect x="278.05" y="127.14000000000001" width="1.1" height="1.2" fill="#fff"/><circle cx="278.6" cy="137.42000000000002" r="4.6" fill="#f5b400"/><rect x="278.05" y="134.42000000000002" width="1.1" height="3.6" fill="#fff"/><rect x="278.05" y="138.82000000000002" width="1.1" height="1.2" fill="#fff"/><circle cx="278.6" cy="149.1" r="4.6" fill="#f5b400"/><rect x="278.05" y="146.1" width="1.1" height="3.6" fill="#fff"/><rect x="278.05" y="150.5" width="1.1" height="1.2" fill="#fff"/><circle cx="278.6" cy="160.78" r="4.6" fill="#f5b400"/><rect x="278.05" y="157.78" width="1.1" height="3.6" fill="#fff"/><rect x="278.05" y="162.18" width="1.1" height="1.2" fill="#fff"/><circle cx="278.6" cy="172.46" r="4.6" fill="#f5b400"/><rect x="278.05" y="169.46" width="1.1" height="3.6" fill="#fff"/><rect x="278.05" y="173.86" width="1.1" height="1.2" fill="#fff"/><circle cx="278.6" cy="184.14000000000001" r="4.6" fill="#f5b400"/><rect x="278.05" y="181.14000000000001" width="1.1" height="3.6" fill="#fff"/><rect x="278.05" y="185.54000000000002" width="1.1" height="1.2" fill="#fff"/><circle cx="278.6" cy="195.82000000000002" r="4.6" fill="#f5b400"/><rect x="278.05" y="192.82000000000002" width="1.1" height="3.6" fill="#fff"/><rect x="278.05" y="197.22000000000003" width="1.1" height="1.2" fill="#fff"/><circle cx="278.6" cy="207.5" r="4.6" fill="#f5b400"/><rect x="278.05" y="204.5" width="1.1" height="3.6" fill="#fff"/><rect x="278.05" y="208.9" width="1.1" height="1.2" fill="#fff"/><circle cx="278.6" cy="219.18" r="4.6" fill="#f5b400"/><rect x="278.05" y="216.18" width="1.1" height="3.6" fill="#fff"/><rect x="278.05" y="220.58" width="1.1" height="1.2" fill="#fff"/><circle cx="278.6" cy="230.86" r="4.6" fill="#f5b400"/><rect x="278.05" y="227.86" width="1.1" height="3.6" fill="#fff"/><rect x="278.05" y="232.26000000000002" width="1.1" height="1.2" fill="#fff"/><circle cx="278.6" cy="242.54" r="4.6" fill="#23963a"/><path d="M276.20000000000005,242.64 L278.0,244.44 L281.20000000000005,240.94" stroke="#fff" stroke-width="1.2" fill="none"/><circle cx="278.6" cy="254.22" r="4.6" fill="#23963a"/><path d="M276.20000000000005,254.32 L278.0,256.12 L281.20000000000005,252.62" stroke="#fff" stroke-width="1.2" fill="none"/><circle cx="278.6" cy="265.9" r="4.6" fill="#23963a"/><path d="M276.20000000000005,266.0 L278.0,267.79999999999995 L281.20000000000005,264.29999999999995" stroke="#fff" stroke-width="1.2" fill="none"/><circle cx="278.6" cy="277.58" r="4.6" fill="#23963a"/><path d="M276.20000000000005,277.68 L278.0,279.47999999999996 L281.20000000000005,275.97999999999996" stroke="#fff" stroke-width="1.2" fill="none"/><circle cx="278.6" cy="289.25999999999993" r="4.6" fill="#23963a"/><path d="M276.20000000000005,289.35999999999996 L278.0,291.1599999999999 L281.20000000000005,287.6599999999999" stroke="#fff" stroke-width="1.2" fill="none"/><circle cx="278.6" cy="300.94" r="4.6" fill="#23963a"/><path d="M276.20000000000005,301.04 L278.0,302.84 L281.20000000000005,299.34" stroke="#fff" stroke-width="1.2" fill="none"/><circle cx="278.6" cy="312.61999999999995" r="4.6" fill="#23963a"/><path d="M276.20000000000005,312.71999999999997 L278.0,314.5199999999999 L281.20000000000005,311.0199999999999" stroke="#fff" stroke-width="1.2" fill="none"/><circle cx="278.6" cy="324.3" r="4.6" fill="#23963a"/><path d="M276.20000000000005,324.40000000000003 L278.0,326.2 L281.20000000000005,322.7" stroke="#fff" stroke-width="1.2" fill="none"/><circle cx="278.6" cy="335.97999999999996" r="4.6" fill="#23963a"/><path d="M276.20000000000005,336.08 L278.0,337.87999999999994 L281.20000000000005,334.37999999999994" stroke="#fff" stroke-width="1.2" fill="none"/><circle cx="278.6" cy="347.65999999999997" r="4.6" fill="#23963a"/><path d="M276.20000000000005,347.76 L278.0,349.55999999999995 L281.20000000000005,346.05999999999995" stroke="#fff" stroke-width="1.2" fill="none"/><circle cx="278.6" cy="359.34" r="4.6" fill="#23963a"/><path d="M276.20000000000005,359.44 L278.0,361.23999999999995 L281.20000000000005,357.73999999999995" stroke="#fff" stroke-width="1.2" fill="none"/><circle cx="278.6" cy="371.02" r="4.6" fill="#23963a"/><path d="M276.20000000000005,371.12 L278.0,372.91999999999996 L281.20000000000005,369.41999999999996" stroke="#fff" stroke-width="1.2" fill="none"/><circle cx="278.6" cy="382.7" r="4.6" fill="#23963a"/><path d="M276.20000000000005,382.8 L278.0,384.59999999999997 L281.20000000000005,381.09999999999997" stroke="#fff" stroke-width="1.2" fill="none"/><circle cx="278.6" cy="394.37999999999994" r="4.6" fill="#d62a36"/><path d="M276.70000000000005,392.47999999999996 L280.5,396.2799999999999 M280.5,392.47999999999996 L276.70000000000005,396.2799999999999" stroke="#fff" stroke-width="1.2"/><circle cx="278.6" cy="406.06" r="4.6" fill="#d62a36"/><path d="M276.70000000000005,404.16 L280.5,407.96 M280.5,404.16 L276.70000000000005,407.96" stroke="#fff" stroke-width="1.2"/><circle cx="278.6" cy="417.73999999999995" r="4.6" fill="#d62a36"/><path d="M276.70000000000005,415.84 L280.5,419.63999999999993 M280.5,415.84 L276.70000000000005,419.63999999999993" stroke="#fff" stroke-width="1.2"/><circle cx="278.6" cy="429.42" r="4.6" fill="#d62a36"/><path d="M276.70000000000005,427.52000000000004 L280.5,431.32 M280.5,427.52000000000004 L276.70000000000005,431.32" stroke="#fff" stroke-width="1.2"/><circle cx="278.6" cy="441.09999999999997" r="4.6" fill="#d62a36"/><path d="M276.70000000000005,439.2 L280.5,442.99999999999994 M280.5,439.2 L276.70000000000005,442.99999999999994" stroke="#fff" stroke-width="1.2"/><circle cx="278.6" cy="452.7799999999999" r="4.6" fill="#d62a36"/><path d="M276.70000000000005,450.87999999999994 L280.5,454.6799999999999 M280.5,450.87999999999994 L276.70000000000005,454.6799999999999" stroke="#fff" stroke-width="1.2"/><path d="M820.8,104.3 L823.2,101.6 L825.6,104.3" stroke="#1a2530" stroke-width="1.6" fill="none"/><path d="M281,463.4 L278.4,465.6 L281,467.8" stroke="#1a2530" stroke-width="1.6" fill="none"/><circle cx="927.5" cy="472.4" r=".7" fill="#333"/><circle cx="929.5" cy="472.4" r=".7" fill="#333"/><circle cx="931.5" cy="472.4" r=".7" fill="#333"/><polygon points="928,489.3 931.2,492.4 928,495.5" fill="#f4f8fc"/></svg>
<div style="left:437.60px;top:377.30px;width:402.00px;height:155.80px;background:#ffffff;"></div>
<div style="left:437.60px;top:377.30px;width:402.00px;height:19.20px;background:#e9e9e9;"></div>
<div style="left:437.60px;top:377.30px;width:1.00px;height:155.80px;background:#d3d9e0;"></div>
<div style="left:838.80px;top:377.30px;width:1.00px;height:155.80px;background:#dcdcdc;"></div>
<div class="t" style="left:455.70px;top:382.00px;font:bold 10.4px/12px 'Liberation Serif',sans-serif;color:#3b3b3b;letter-spacing:0.000px;transform:scaleX(0.9142);transform-origin:0 50%;">Predkontácia dokladu</div>
<div class="t" style="left:776.90px;top:382.00px;font:bold 10.4px/12px 'Liberation Serif',sans-serif;color:#4a4a4a;letter-spacing:-0.200px;">3</div>
<div style="left:446.40px;top:402.30px;width:287.00px;height:122.00px;background:#f7fafe;"></div>
<div style="left:446.40px;top:402.30px;width:275.00px;height:12.20px;background:#f9fbfe;"></div>
<div style="left:446.40px;top:414.50px;width:244.00px;height:11.90px;background:#034a71;"></div>
<div style="left:446.40px;top:426.40px;width:244.00px;height:11.70px;background:#f3f8fe;"></div>
<div style="left:446.40px;top:438.10px;width:244.00px;height:11.70px;background:#ffffff;"></div>
<div style="left:627.00px;top:402.30px;width:0.80px;height:47.50px;background:#e3eaf3;"></div>
<div style="left:690.20px;top:402.30px;width:0.80px;height:47.50px;background:#e3eaf3;"></div>
<div style="left:721.20px;top:402.30px;width:12.00px;height:122.00px;background:#eef3f8;"></div>
<div style="left:721.20px;top:402.30px;width:12.00px;height:12.20px;background:#ffffff;"></div>
<div style="left:721.20px;top:414.50px;width:12.00px;height:59.00px;background:#d4e2ef;"></div>
<div style="left:721.20px;top:512.00px;width:12.00px;height:12.30px;background:#ffffff;"></div>
<div style="left:446.4px;top:402.3px;width:287px;height:122px;border:0.8px solid #e0e8f3;box-sizing:border-box"></div>
<div class="t" style="left:449.00px;top:404.00px;font:normal 8.0px/10px 'Liberation Sans',sans-serif;color:#3a3f48;letter-spacing:0.000px;transform:scaleX(0.8850);transform-origin:0 50%;">Typ predkontácie</div>
<div class="t" style="left:628.80px;top:404.00px;font:normal 8.0px/10px 'Liberation Sans',sans-serif;color:#3a3f48;letter-spacing:0.000px;transform:scaleX(0.8850);transform-origin:0 50%;">Prednostná voľba</div>
<div class="t" style="left:449.00px;top:416.00px;font:normal 8.0px/10px 'Liberation Sans',sans-serif;color:#f2f6fa;letter-spacing:0.000px;transform:scaleX(0.8850);transform-origin:0 50%;">Predaj tovaru</div>
<div class="t" style="left:449.00px;top:428.00px;font:normal 8.0px/10px 'Liberation Sans',sans-serif;color:#333;letter-spacing:0.000px;transform:scaleX(0.8850);transform-origin:0 50%;">Prodej služeb</div>
<div class="t" style="left:449.00px;top:439.00px;font:normal 8.0px/10px 'Liberation Sans',sans-serif;color:#333;letter-spacing:0.000px;transform:scaleX(0.8850);transform-origin:0 50%;">Prodej náhradních dílů</div>
<div style="left:742.60px;top:401.80px;width:88.80px;height:15.40px;background:#5087b9;"></div>
<div class="t" style="left:756.25px;top:405.00px;font:normal 7.8px/10px 'Liberation Sans',sans-serif;color:#f4f8fc;letter-spacing:0.000px;transform:scaleX(0.8923);transform-origin:0 50%;">Definíc.predkontácií</div>
<div style="left:742.60px;top:491.80px;width:88.80px;height:14.80px;background:#5087b9;"></div>
<div class="t" style="left:776.94px;top:495.00px;font:normal 7.8px/10px 'Liberation Sans',sans-serif;color:#f4f8fc;letter-spacing:0.000px;transform:scaleX(0.8923);transform-origin:0 50%;">Ručne</div>
<div style="left:742.60px;top:511.20px;width:88.80px;height:15.10px;background:#5087b9;"></div>
<div class="t" style="left:769.59px;top:514.00px;font:normal 7.8px/10px 'Liberation Sans',sans-serif;color:#f4f8fc;letter-spacing:0.000px;transform:scaleX(0.8923);transform-origin:0 50%;">Kontovanie</div>
<svg style="position:absolute;left:0;top:0" width="1168" height="730"><polygon points="443,382.5 451.3,386.5 444.6,392" fill="#fafafa"/><line x1="445.5" y1="390" x2="449.5" y2="387.6" stroke="#8a8a8a" stroke-width=".9"/><line x1="790.4" y1="387.7" x2="797.6" y2="387.7" stroke="#484848" stroke-width="1.1"/><rect x="807.6" y="384.0" width="7" height="7" fill="none" stroke="#484848" stroke-width="1.1"/><path d="M824,383.4 L832.2,391.59999999999997 M832.2,383.4 L824,391.59999999999997" stroke="#484848" stroke-width="1"/><path d="M724.8,410.4 L727.2,407.7 L729.6,410.4" stroke="#1a2530" stroke-width="1.6" fill="none"/><path d="M724.8,516.2 L727.2,518.9 L729.6,516.2" stroke="#1a2530" stroke-width="1.6" fill="none"/></svg>
<div style="left:577.00px;top:528.80px;width:585.00px;height:195.00px;background:#ffffff;"></div>
<div style="left:577.00px;top:528.80px;width:585.00px;height:18.50px;background:#1d4868;"></div>
<div class="t" style="left:594.50px;top:533.00px;font:bold 10.4px/12px 'Liberation Serif',sans-serif;color:#f0f3f6;letter-spacing:0.000px;transform:scaleX(0.9283);transform-origin:0 50%;">Definícia predkontácií</div>
<div class="t" style="left:1099.00px;top:533.00px;font:bold 10.4px/12px 'Liberation Serif',sans-serif;color:#f0f3f6;letter-spacing:-0.200px;">3</div>
<div style="left:585.60px;top:566.20px;width:471.40px;height:132.00px;background:#f7fafe;"></div>
<div style="left:585.6px;top:566.2px;width:471.4px;height:132px;border:0.9px solid #dbe5f3;box-sizing:border-box"></div>
<div style="left:585.6px;top:552.8px;width:35.7px;height:14.2px;background:#f7fafe;border:0.9px solid #dbe5f3;border-bottom:none;box-sizing:border-box"></div>
<div class="t" style="left:589.80px;top:556.00px;font:normal 8px/10px 'Liberation Sans',sans-serif;color:#555;letter-spacing:0.000px;transform:scaleX(0.8621);transform-origin:0 50%;">Seznam</div>
<div class="t" style="left:625.00px;top:556.00px;font:normal 8px/10px 'Liberation Sans',sans-serif;color:#3a4150;letter-spacing:0.000px;transform:scaleX(0.8899);transform-origin:0 50%;">Detail</div>
<div style="left:593.60px;top:574.40px;width:453.20px;height:113.80px;background:#f6f9fd;"></div>
<div style="left:593.6px;top:574.4px;width:453.19999999999993px;height:11.3px;background:linear-gradient(#f8fafd,#e9eff7)"></div>
<div style="left:593.60px;top:585.70px;width:12.20px;height:11.90px;background:#fbfcfe;"></div>
<div style="left:605.80px;top:585.70px;width:38.30px;height:11.90px;background:#034a71;"></div>
<div style="left:644.10px;top:585.70px;width:96.70px;height:11.90px;background:#034a71;"></div>
<div style="left:740.80px;top:585.70px;width:45.00px;height:11.90px;background:#034a71;"></div>
<div style="left:785.80px;top:585.70px;width:44.80px;height:11.90px;background:#034a71;"></div>
<div style="left:830.60px;top:585.70px;width:87.40px;height:11.90px;background:#034a71;"></div>
<div style="left:918.00px;top:585.70px;width:50.30px;height:11.90px;background:#034a71;"></div>
<div style="left:968.30px;top:585.70px;width:45.10px;height:11.90px;background:#034a71;"></div>
<div style="left:1013.40px;top:585.70px;width:21.50px;height:11.90px;background:#034a71;"></div>
<div style="left:593.60px;top:597.55px;width:12.20px;height:11.90px;background:#fbfcfe;"></div>
<div style="left:605.80px;top:597.55px;width:38.30px;height:11.90px;background:#f3f8fe;"></div>
<div style="left:644.10px;top:597.55px;width:96.70px;height:11.90px;background:#f3f8fe;"></div>
<div style="left:740.80px;top:597.55px;width:45.00px;height:11.90px;background:#f3f8fe;"></div>
<div style="left:785.80px;top:597.55px;width:44.80px;height:11.90px;background:#f3f8fe;"></div>
<div style="left:830.60px;top:597.55px;width:87.40px;height:11.90px;background:#f3f8fe;"></div>
<div style="left:918.00px;top:597.55px;width:50.30px;height:11.90px;background:#f3f8fe;"></div>
<div style="left:968.30px;top:597.55px;width:45.10px;height:11.90px;background:#f3f8fe;"></div>
<div style="left:1013.40px;top:597.55px;width:21.50px;height:11.90px;background:#f3f8fe;"></div>
<div style="left:593.60px;top:609.40px;width:12.20px;height:11.90px;background:#fbfcfe;"></div>
<div style="left:605.80px;top:609.40px;width:38.30px;height:11.90px;background:#ffffff;"></div>
<div style="left:644.10px;top:609.40px;width:96.70px;height:11.90px;background:#ffffff;"></div>
<div style="left:740.80px;top:609.40px;width:45.00px;height:11.90px;background:#ffffff;"></div>
<div style="left:785.80px;top:609.40px;width:44.80px;height:11.90px;background:#ffffff;"></div>
<div style="left:830.60px;top:609.40px;width:87.40px;height:11.90px;background:#ffffff;"></div>
<div style="left:918.00px;top:609.40px;width:50.30px;height:11.90px;background:#ffffff;"></div>
<div style="left:968.30px;top:609.40px;width:45.10px;height:11.90px;background:#ffffff;"></div>
<div style="left:1013.40px;top:609.40px;width:21.50px;height:11.90px;background:#ffffff;"></div>
<div style="left:605.50px;top:574.40px;width:0.70px;height:47.00px;background:#e3eaf3;"></div>
<div style="left:643.80px;top:574.40px;width:0.70px;height:47.00px;background:#e3eaf3;"></div>
<div style="left:740.50px;top:574.40px;width:0.70px;height:47.00px;background:#e3eaf3;"></div>
<div style="left:785.50px;top:574.40px;width:0.70px;height:47.00px;background:#e3eaf3;"></div>
<div style="left:830.30px;top:574.40px;width:0.70px;height:47.00px;background:#e3eaf3;"></div>
<div style="left:917.70px;top:574.40px;width:0.70px;height:47.00px;background:#e3eaf3;"></div>
<div style="left:968.00px;top:574.40px;width:0.70px;height:47.00px;background:#e3eaf3;"></div>
<div style="left:1013.10px;top:574.40px;width:0.70px;height:47.00px;background:#e3eaf3;"></div>
<div style="left:605.3px;top:585.9px;width:39px;height:12px;border:1px solid #d85a72;box-sizing:border-box"></div>
<div class="t" style="left:607.60px;top:576.00px;font:normal 8.0px/10px 'Liberation Sans',sans-serif;color:#3a3f48;letter-spacing:0.000px;transform:scaleX(0.8850);transform-origin:0 50%;">Index DPH</div>
<div class="t" style="left:646.00px;top:576.00px;font:normal 8.0px/10px 'Liberation Sans',sans-serif;color:#3a3f48;letter-spacing:0.000px;transform:scaleX(0.8850);transform-origin:0 50%;">Popis účtovnej položky</div>
<div class="t" style="left:743.00px;top:576.00px;font:normal 8.0px/10px 'Liberation Sans',sans-serif;color:#3a3f48;letter-spacing:0.000px;transform:scaleX(0.8850);transform-origin:0 50%;">Účet MD</div>
<div class="t" style="left:788.00px;top:576.00px;font:normal 8.0px/10px 'Liberation Sans',sans-serif;color:#3a3f48;letter-spacing:0.000px;transform:scaleX(0.8850);transform-origin:0 50%;">Účet DAL</div>
<div class="t" style="left:832.80px;top:576.00px;font:normal 8.0px/10px 'Liberation Sans',sans-serif;color:#3a3f48;letter-spacing:0.000px;transform:scaleX(0.8850);transform-origin:0 50%;">Kód účtovnej skupiny</div>
<div class="t" style="left:920.20px;top:576.00px;font:normal 8.0px/10px 'Liberation Sans',sans-serif;color:#3a3f48;letter-spacing:0.000px;transform:scaleX(0.8850);transform-origin:0 50%;">Prevziať popis</div>
<div class="t" style="left:970.60px;top:576.00px;font:normal 8.0px/10px 'Liberation Sans',sans-serif;color:#3a3f48;letter-spacing:0.000px;transform:scaleX(0.8850);transform-origin:0 50%;">Platnosť od</div>
<div class="t" style="left:1015.70px;top:576.00px;font:normal 8.0px/10px 'Liberation Sans',sans-serif;color:#3a3f48;letter-spacing:0.000px;transform:scaleX(0.8850);transform-origin:0 50%;">Plat...</div>
<div class="t" style="left:607.60px;top:587.00px;font:normal 8.0px/10px 'Liberation Sans',sans-serif;color:#f2f6fa;letter-spacing:0.000px;transform:scaleX(0.8850);transform-origin:0 50%;">1</div>
<div class="t" style="left:645.90px;top:587.00px;font:normal 8.0px/10px 'Liberation Sans',sans-serif;color:#f2f6fa;letter-spacing:0.000px;transform:scaleX(0.8850);transform-origin:0 50%;">Predaj tovaru</div>
<div class="t" style="left:743.00px;top:587.00px;font:normal 8.0px/10px 'Liberation Sans',sans-serif;color:#f2f6fa;letter-spacing:0.000px;transform:scaleX(0.8850);transform-origin:0 50%;">311</div>
<div class="t" style="left:788.00px;top:587.00px;font:normal 8.0px/10px 'Liberation Sans',sans-serif;color:#f2f6fa;letter-spacing:0.000px;transform:scaleX(0.8850);transform-origin:0 50%;">604</div>
<div class="t" style="left:920.20px;top:587.00px;font:normal 8.0px/10px 'Liberation Sans',sans-serif;color:#f2f6fa;letter-spacing:0.000px;transform:scaleX(0.8850);transform-origin:0 50%;">Vždy</div>
<div class="t" style="left:607.60px;top:599.00px;font:normal 8.0px/10px 'Liberation Sans',sans-serif;color:#333;letter-spacing:0.000px;transform:scaleX(0.8850);transform-origin:0 50%;">2</div>
<div class="t" style="left:645.90px;top:599.00px;font:normal 8.0px/10px 'Liberation Sans',sans-serif;color:#333;letter-spacing:0.000px;transform:scaleX(0.8850);transform-origin:0 50%;">DPH</div>
<div class="t" style="left:743.00px;top:599.00px;font:normal 8.0px/10px 'Liberation Sans',sans-serif;color:#333;letter-spacing:0.000px;transform:scaleX(0.8850);transform-origin:0 50%;">311</div>
<div class="t" style="left:788.00px;top:599.00px;font:normal 8.0px/10px 'Liberation Sans',sans-serif;color:#333;letter-spacing:0.000px;transform:scaleX(0.8850);transform-origin:0 50%;">343100</div>
<div class="t" style="left:607.60px;top:611.00px;font:normal 8.0px/10px 'Liberation Sans',sans-serif;color:#333;letter-spacing:0.000px;transform:scaleX(0.8850);transform-origin:0 50%;">999</div>
<div class="t" style="left:645.90px;top:611.00px;font:normal 8.0px/10px 'Liberation Sans',sans-serif;color:#333;letter-spacing:0.000px;transform:scaleX(0.8850);transform-origin:0 50%;">Halierové vyrovnanie</div>
<div class="t" style="left:743.00px;top:611.00px;font:normal 8.0px/10px 'Liberation Sans',sans-serif;color:#333;letter-spacing:0.000px;transform:scaleX(0.8850);transform-origin:0 50%;">311</div>
<div class="t" style="left:788.00px;top:611.00px;font:normal 8.0px/10px 'Liberation Sans',sans-serif;color:#333;letter-spacing:0.000px;transform:scaleX(0.8850);transform-origin:0 50%;">668900</div>
<div style="left:1034.90px;top:585.70px;width:11.90px;height:90.40px;background:#eef3f8;"></div>
<div style="left:1034.90px;top:585.70px;width:11.90px;height:48.20px;background:#d4e2ef;"></div>
<div style="left:1034.90px;top:664.60px;width:11.90px;height:11.50px;background:#ffffff;"></div>
<div style="left:593.60px;top:676.10px;width:441.30px;height:12.10px;background:#eef3f8;"></div>
<div style="left:593.60px;top:676.10px;width:12.20px;height:12.10px;background:#ffffff;"></div>
<div style="left:605.90px;top:676.10px;width:10.60px;height:12.10px;background:#d4e2ef;"></div>
<div style="left:1023.00px;top:676.10px;width:11.90px;height:12.10px;background:#ffffff;"></div>
<div style="left:1034.90px;top:676.10px;width:11.90px;height:12.10px;background:#ffffff;"></div>
<div style="left:593.6px;top:574.4px;width:453.19999999999993px;height:113.80000000000007px;border:0.8px solid #e0e8f3;box-sizing:border-box"></div>
<div style="left:588.7px;top:704.4px;width:8.6px;height:8.7px;background:#fff;border:0.9px solid #b9c6d6;box-sizing:border-box"></div>
<div class="t" style="left:599.50px;top:704.00px;font:normal 8.0px/10px 'Liberation Sans',sans-serif;color:#333;letter-spacing:0.000px;transform:scaleX(0.8850);transform-origin:0 50%;">Zobraziť všetko</div>
<div style="left:1065.00px;top:564.00px;width:89.00px;height:15.50px;background:#5087b9;"></div>
<div class="t" style="left:1077.78px;top:567.00px;font:normal 7.8px/10px 'Liberation Sans',sans-serif;color:#f4f8fc;letter-spacing:0.000px;transform:scaleX(0.8923);transform-origin:0 50%;">História predkontácií</div>
<svg style="position:absolute;left:0;top:0" width="1168" height="730"><polygon points="581.5,532.9 591.8,538.4 581.5,543.9" fill="#f4f4f4"/><polygon points="581.5,538.4 591.8,538.4 581.5,543.9" fill="#c8c8c8"/><line x1="1113.2" y1="538.9" x2="1120.4" y2="538.9" stroke="#c9d4de" stroke-width="1.1"/><rect x="1130" y="535.2" width="7" height="7" fill="none" stroke="#c9d4de" stroke-width="1.1"/><path d="M1146.6,534.6 L1154.8,542.8000000000001 M1154.8,534.6 L1146.6,542.8000000000001" stroke="#c9d4de" stroke-width="1"/><path d="M595.6,591.1500000000001 h2.2 v4.6 h-2.2 z" fill="#2a9a3a"/><path d="M598.3,591.0500000000001 l2,-3.4 q1.2,-0.3 1,1 l-0.4,1.6 h2.2 q0.9,0.1 0.8,1 l-0.7,3.6 q-0.2,0.6 -0.9,0.6 h-4 z" fill="#2a9a3a"/><path d="M595.6,603.0000000000001 h2.2 v4.6 h-2.2 z" fill="#2a9a3a"/><path d="M598.3,602.9000000000001 l2,-3.4 q1.2,-0.3 1,1 l-0.4,1.6 h2.2 q0.9,0.1 0.8,1 l-0.7,3.6 q-0.2,0.6 -0.9,0.6 h-4 z" fill="#2a9a3a"/><path d="M595.6,614.8500000000001 h2.2 v4.6 h-2.2 z" fill="#2a9a3a"/><path d="M598.3,614.7500000000001 l2,-3.4 q1.2,-0.3 1,1 l-0.4,1.6 h2.2 q0.9,0.1 0.8,1 l-0.7,3.6 q-0.2,0.6 -0.9,0.6 h-4 z" fill="#2a9a3a"/><path d="M1038.5,582.3 L1040.9,579.6 L1043.3,582.3" stroke="#1a2530" stroke-width="1.6" fill="none"/><path d="M1038.5,669.2 L1040.9,671.9 L1043.3,669.2" stroke="#1a2530" stroke-width="1.6" fill="none"/><path d="M600.6,680 L598,682.2 L600.6,684.4" stroke="#1a2530" stroke-width="1.6" fill="none"/><path d="M1027.6,680 L1030.2,682.2 L1027.6,684.4" stroke="#1a2530" stroke-width="1.6" fill="none"/></svg>
</body></html>
